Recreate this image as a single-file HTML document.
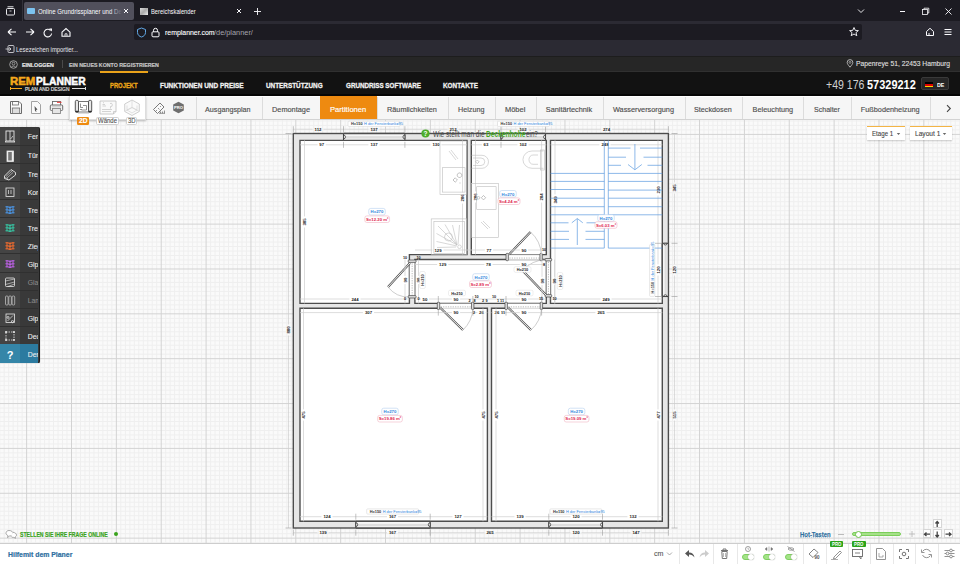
<!DOCTYPE html><html><head><meta charset="utf-8"><style>
*{margin:0;padding:0;box-sizing:border-box}
html,body{width:960px;height:564px;overflow:hidden;background:#fff;font-family:"Liberation Sans",sans-serif;position:relative}
#canvas{position:absolute;left:0;top:119px;width:960px;height:423.5px;background:#fafafa;overflow:hidden}
.grid{position:absolute;left:0;top:0}
.t{position:absolute;white-space:nowrap;line-height:1;transform-origin:0 0}
svg text{font-family:"Liberation Sans",sans-serif}
</style></head><body><div id="canvas"><svg class="grid" width="960" height="423.5" viewBox="0 0 960 423.5"><path d="M-0.28 0V564M4.21 0V564M8.70 0V564M13.18 0V564M17.67 0V564M22.15 0V564M31.13 0V564M35.61 0V564M40.10 0V564M44.58 0V564M49.07 0V564M53.56 0V564M58.04 0V564M62.53 0V564M67.01 0V564M75.99 0V564M80.47 0V564M84.96 0V564M89.44 0V564M93.93 0V564M98.42 0V564M102.90 0V564M107.39 0V564M111.87 0V564M120.85 0V564M125.33 0V564M129.82 0V564M134.30 0V564M138.79 0V564M143.28 0V564M147.76 0V564M152.25 0V564M156.73 0V564M165.71 0V564M170.19 0V564M174.68 0V564M179.16 0V564M183.65 0V564M188.14 0V564M192.62 0V564M197.11 0V564M201.59 0V564M210.57 0V564M215.05 0V564M219.54 0V564M224.02 0V564M228.51 0V564M233.00 0V564M237.48 0V564M241.97 0V564M246.45 0V564M255.43 0V564M259.91 0V564M264.40 0V564M268.88 0V564M273.37 0V564M277.86 0V564M282.34 0V564M286.83 0V564M291.31 0V564M300.29 0V564M304.77 0V564M309.26 0V564M313.74 0V564M318.23 0V564M322.72 0V564M327.20 0V564M331.69 0V564M336.17 0V564M345.15 0V564M349.63 0V564M354.12 0V564M358.60 0V564M363.09 0V564M367.58 0V564M372.06 0V564M376.55 0V564M381.03 0V564M390.01 0V564M394.49 0V564M398.98 0V564M403.46 0V564M407.95 0V564M412.44 0V564M416.92 0V564M421.41 0V564M425.89 0V564M434.87 0V564M439.35 0V564M443.84 0V564M448.32 0V564M452.81 0V564M457.30 0V564M461.78 0V564M466.27 0V564M470.75 0V564M479.73 0V564M484.21 0V564M488.70 0V564M493.18 0V564M497.67 0V564M502.16 0V564M506.64 0V564M511.13 0V564M515.61 0V564M524.59 0V564M529.07 0V564M533.56 0V564M538.04 0V564M542.53 0V564M547.02 0V564M551.50 0V564M555.99 0V564M560.47 0V564M569.45 0V564M573.93 0V564M578.42 0V564M582.90 0V564M587.39 0V564M591.88 0V564M596.36 0V564M600.85 0V564M605.33 0V564M614.31 0V564M618.79 0V564M623.28 0V564M627.76 0V564M632.25 0V564M636.74 0V564M641.22 0V564M645.71 0V564M650.19 0V564M659.17 0V564M663.65 0V564M668.14 0V564M672.62 0V564M677.11 0V564M681.60 0V564M686.08 0V564M690.57 0V564M695.05 0V564M704.03 0V564M708.51 0V564M713.00 0V564M717.48 0V564M721.97 0V564M726.46 0V564M730.94 0V564M735.43 0V564M739.91 0V564M748.89 0V564M753.37 0V564M757.86 0V564M762.34 0V564M766.83 0V564M771.32 0V564M775.80 0V564M780.29 0V564M784.77 0V564M793.75 0V564M798.23 0V564M802.72 0V564M807.20 0V564M811.69 0V564M816.18 0V564M820.66 0V564M825.15 0V564M829.63 0V564M838.61 0V564M843.09 0V564M847.58 0V564M852.06 0V564M856.55 0V564M861.04 0V564M865.52 0V564M870.01 0V564M874.49 0V564M883.47 0V564M887.95 0V564M892.44 0V564M896.92 0V564M901.41 0V564M905.90 0V564M910.38 0V564M914.87 0V564M919.35 0V564M928.33 0V564M932.81 0V564M937.30 0V564M941.78 0V564M946.27 0V564M950.76 0V564M955.24 0V564M959.73 0V564M0 1.94H960M0 6.43H960M0 10.91H960M0 19.89H960M0 24.37H960M0 28.86H960M0 33.34H960M0 37.83H960M0 42.32H960M0 46.80H960M0 51.29H960M0 55.77H960M0 64.75H960M0 69.23H960M0 73.72H960M0 78.20H960M0 82.69H960M0 87.18H960M0 91.66H960M0 96.15H960M0 100.63H960M0 109.61H960M0 114.09H960M0 118.58H960M0 123.06H960M0 127.55H960M0 132.04H960M0 136.52H960M0 141.01H960M0 145.49H960M0 154.47H960M0 158.95H960M0 163.44H960M0 167.92H960M0 172.41H960M0 176.90H960M0 181.38H960M0 185.87H960M0 190.35H960M0 199.33H960M0 203.81H960M0 208.30H960M0 212.78H960M0 217.27H960M0 221.76H960M0 226.24H960M0 230.73H960M0 235.21H960M0 244.19H960M0 248.67H960M0 253.16H960M0 257.64H960M0 262.13H960M0 266.62H960M0 271.10H960M0 275.59H960M0 280.07H960M0 289.05H960M0 293.53H960M0 298.02H960M0 302.50H960M0 306.99H960M0 311.48H960M0 315.96H960M0 320.45H960M0 324.93H960M0 333.91H960M0 338.39H960M0 342.88H960M0 347.36H960M0 351.85H960M0 356.34H960M0 360.82H960M0 365.31H960M0 369.79H960M0 378.77H960M0 383.25H960M0 387.74H960M0 392.22H960M0 396.71H960M0 401.20H960M0 405.68H960M0 410.17H960M0 414.65H960M0 423.63H960" stroke="#efefef" stroke-width="1" fill="none"/><path d="M26.64 0V564M71.50 0V564M116.36 0V564M161.22 0V564M206.08 0V564M250.94 0V564M295.80 0V564M340.66 0V564M385.52 0V564M430.38 0V564M475.24 0V564M520.10 0V564M564.96 0V564M609.82 0V564M654.68 0V564M699.54 0V564M744.40 0V564M789.26 0V564M834.12 0V564M878.98 0V564M923.84 0V564M0 15.40H960M0 60.26H960M0 105.12H960M0 149.98H960M0 194.84H960M0 239.70H960M0 284.56H960M0 329.42H960M0 374.28H960M0 419.14H960" stroke="#d3d3d3" stroke-width="1" fill="none"/></svg></div><svg width="960" height="564" viewBox="0 0 960 564" style="position:absolute;left:0;top:0"><line x1="293.3" y1="129.2" x2="312.45" y2="129.2" stroke="#cfcfcf" stroke-width="0.7"/><line x1="323.55" y1="129.2" x2="368.45" y2="129.2" stroke="#cfcfcf" stroke-width="0.7"/><line x1="379.55" y1="129.2" x2="447.45" y2="129.2" stroke="#cfcfcf" stroke-width="0.7"/><line x1="458.55" y1="129.2" x2="517.45" y2="129.2" stroke="#cfcfcf" stroke-width="0.7"/><line x1="528.55" y1="129.2" x2="600.95" y2="129.2" stroke="#cfcfcf" stroke-width="0.7"/><line x1="612.05" y1="129.2" x2="668.4" y2="129.2" stroke="#cfcfcf" stroke-width="0.7"/><line x1="293.3" y1="126.19999999999999" x2="293.3" y2="132.2" stroke="#9a9a9a" stroke-width="0.6"/><line x1="343.5" y1="126.19999999999999" x2="343.5" y2="132.2" stroke="#9a9a9a" stroke-width="0.6"/><line x1="404.9" y1="126.19999999999999" x2="404.9" y2="132.2" stroke="#9a9a9a" stroke-width="0.6"/><line x1="501" y1="126.19999999999999" x2="501" y2="132.2" stroke="#9a9a9a" stroke-width="0.6"/><line x1="545.5" y1="126.19999999999999" x2="545.5" y2="132.2" stroke="#9a9a9a" stroke-width="0.6"/><line x1="668.4" y1="126.19999999999999" x2="668.4" y2="132.2" stroke="#9a9a9a" stroke-width="0.6"/><text x="318" y="129.2" font-size="4.3" fill="#1a1a1a" text-anchor="middle" dominant-baseline="central" font-weight="bold">112</text><text x="374" y="129.2" font-size="4.3" fill="#1a1a1a" text-anchor="middle" dominant-baseline="central" font-weight="bold">137</text><text x="453" y="129.2" font-size="4.3" fill="#1a1a1a" text-anchor="middle" dominant-baseline="central" font-weight="bold">212</text><text x="523" y="129.2" font-size="4.3" fill="#1a1a1a" text-anchor="middle" dominant-baseline="central" font-weight="bold">102</text><text x="606.5" y="129.2" font-size="4.3" fill="#1a1a1a" text-anchor="middle" dominant-baseline="central" font-weight="bold">274</text><line x1="293.3" y1="532.7" x2="317.45" y2="532.7" stroke="#cfcfcf" stroke-width="0.7"/><line x1="328.55" y1="532.7" x2="386.95" y2="532.7" stroke="#cfcfcf" stroke-width="0.7"/><line x1="398.05" y1="532.7" x2="484.45" y2="532.7" stroke="#cfcfcf" stroke-width="0.7"/><line x1="495.55" y1="532.7" x2="570.45" y2="532.7" stroke="#cfcfcf" stroke-width="0.7"/><line x1="581.55" y1="532.7" x2="630.45" y2="532.7" stroke="#cfcfcf" stroke-width="0.7"/><line x1="641.55" y1="532.7" x2="668.4" y2="532.7" stroke="#cfcfcf" stroke-width="0.7"/><line x1="293.3" y1="529.7" x2="293.3" y2="535.7" stroke="#9a9a9a" stroke-width="0.6"/><line x1="355.8" y1="529.7" x2="355.8" y2="535.7" stroke="#9a9a9a" stroke-width="0.6"/><line x1="430.2" y1="529.7" x2="430.2" y2="535.7" stroke="#9a9a9a" stroke-width="0.6"/><line x1="548.8" y1="529.7" x2="548.8" y2="535.7" stroke="#9a9a9a" stroke-width="0.6"/><line x1="602.5" y1="529.7" x2="602.5" y2="535.7" stroke="#9a9a9a" stroke-width="0.6"/><line x1="668.4" y1="529.7" x2="668.4" y2="535.7" stroke="#9a9a9a" stroke-width="0.6"/><text x="323" y="532.7" font-size="4.3" fill="#1a1a1a" text-anchor="middle" dominant-baseline="central" font-weight="bold">139</text><text x="392.5" y="532.7" font-size="4.3" fill="#1a1a1a" text-anchor="middle" dominant-baseline="central" font-weight="bold">167</text><text x="490" y="532.7" font-size="4.3" fill="#1a1a1a" text-anchor="middle" dominant-baseline="central" font-weight="bold">265</text><text x="576" y="532.7" font-size="4.3" fill="#1a1a1a" text-anchor="middle" dominant-baseline="central" font-weight="bold">120</text><text x="636" y="532.7" font-size="4.3" fill="#1a1a1a" text-anchor="middle" dominant-baseline="central" font-weight="bold">147</text><line x1="288.5" y1="133.5" x2="288.5" y2="324.45" stroke="#cfcfcf" stroke-width="0.7"/><line x1="288.5" y1="335.55" x2="288.5" y2="528" stroke="#cfcfcf" stroke-width="0.7"/><line x1="285.5" y1="133.5" x2="291.5" y2="133.5" stroke="#9a9a9a" stroke-width="0.6"/><line x1="285.5" y1="528" x2="291.5" y2="528" stroke="#9a9a9a" stroke-width="0.6"/><text x="288.5" y="330" font-size="4.3" fill="#1a1a1a" text-anchor="middle" dominant-baseline="central" font-weight="bold" transform="rotate(-90 288.5 330)">880</text><line x1="674.5" y1="133.5" x2="674.5" y2="182.45" stroke="#cfcfcf" stroke-width="0.7"/><line x1="674.5" y1="193.55" x2="674.5" y2="264.45" stroke="#cfcfcf" stroke-width="0.7"/><line x1="674.5" y1="275.55" x2="674.5" y2="409.45" stroke="#cfcfcf" stroke-width="0.7"/><line x1="674.5" y1="420.55" x2="674.5" y2="528" stroke="#cfcfcf" stroke-width="0.7"/><line x1="671.5" y1="133.5" x2="677.5" y2="133.5" stroke="#9a9a9a" stroke-width="0.6"/><line x1="671.5" y1="243.3" x2="677.5" y2="243.3" stroke="#9a9a9a" stroke-width="0.6"/><line x1="671.5" y1="296.5" x2="677.5" y2="296.5" stroke="#9a9a9a" stroke-width="0.6"/><line x1="671.5" y1="528" x2="677.5" y2="528" stroke="#9a9a9a" stroke-width="0.6"/><text x="674.5" y="188" font-size="4.3" fill="#1a1a1a" text-anchor="middle" dominant-baseline="central" font-weight="bold" transform="rotate(-90 674.5 188)">345</text><text x="674.5" y="270" font-size="4.3" fill="#1a1a1a" text-anchor="middle" dominant-baseline="central" font-weight="bold" transform="rotate(-90 674.5 270)">120</text><text x="674.5" y="415" font-size="4.3" fill="#1a1a1a" text-anchor="middle" dominant-baseline="central" font-weight="bold" transform="rotate(-90 674.5 415)">515</text><rect x="293.3" y="133.5" width="375.1" height="394.5" fill="#e6e6e6" stroke="#4d4d4d" stroke-width="1.4"/><path d="M300 140.4L467 140.4L467 254.6L409.4 254.6L409.4 303.4L300 303.4ZM471.3 140.4L546.3 140.4L546.3 254.6L471.3 254.6ZM550.5 140.4L662.3 140.4L662.3 303.4L550.5 303.4ZM414.9 259.5L546.3 259.5L546.3 303.4L414.9 303.4ZM300 308.3L487.4 308.3L487.4 521.3L300 521.3ZM491.5 308.3L662.3 308.3L662.3 521.3L491.5 521.3Z" fill="#fff" stroke="#4d4d4d" stroke-width="1.4"/><rect x="343.5" y="133.5" width="61.39999999999998" height="6.900000000000006" fill="#f6f6f6"/><rect x="343.5" y="136.122" width="61.39999999999998" height="2.4840000000000018" fill="#dedede"/><line x1="343.5" y1="133.5" x2="404.9" y2="133.5" stroke="#4d4d4d" stroke-width="1.3"/><line x1="343.5" y1="140.4" x2="404.9" y2="140.4" stroke="#4d4d4d" stroke-width="1.3"/><line x1="343.5" y1="133.5" x2="343.5" y2="140.4" stroke="#444" stroke-width="1.1"/><line x1="404.9" y1="133.5" x2="404.9" y2="140.4" stroke="#444" stroke-width="1.1"/><path d="M343.5 135.018A1.9320000000000017 1.9320000000000017 0 0 1 343.5 138.882Z M404.9 135.018A1.9320000000000017 1.9320000000000017 0 0 0 404.9 138.882Z" fill="#fff" stroke="#333" stroke-width="0.8"/><rect x="501" y="133.5" width="44.5" height="6.900000000000006" fill="#f6f6f6"/><rect x="501" y="136.122" width="44.5" height="2.4840000000000018" fill="#dedede"/><line x1="501" y1="133.5" x2="545.5" y2="133.5" stroke="#4d4d4d" stroke-width="1.3"/><line x1="501" y1="140.4" x2="545.5" y2="140.4" stroke="#4d4d4d" stroke-width="1.3"/><line x1="501" y1="133.5" x2="501" y2="140.4" stroke="#444" stroke-width="1.1"/><line x1="545.5" y1="133.5" x2="545.5" y2="140.4" stroke="#444" stroke-width="1.1"/><path d="M501 135.018A1.9320000000000017 1.9320000000000017 0 0 1 501 138.882Z M545.5 135.018A1.9320000000000017 1.9320000000000017 0 0 0 545.5 138.882Z" fill="#fff" stroke="#333" stroke-width="0.8"/><rect x="355.8" y="521.3" width="74.39999999999998" height="6.7000000000000455" fill="#f6f6f6"/><rect x="355.8" y="523.846" width="74.39999999999998" height="2.4120000000000164" fill="#dedede"/><line x1="355.8" y1="521.3" x2="430.2" y2="521.3" stroke="#4d4d4d" stroke-width="1.3"/><line x1="355.8" y1="528" x2="430.2" y2="528" stroke="#4d4d4d" stroke-width="1.3"/><line x1="355.8" y1="521.3" x2="355.8" y2="528" stroke="#444" stroke-width="1.1"/><line x1="430.2" y1="521.3" x2="430.2" y2="528" stroke="#444" stroke-width="1.1"/><path d="M355.8 522.774A1.876000000000013 1.876000000000013 0 0 1 355.8 526.526Z M430.2 522.774A1.876000000000013 1.876000000000013 0 0 0 430.2 526.526Z" fill="#fff" stroke="#333" stroke-width="0.8"/><rect x="548.8" y="521.3" width="53.700000000000045" height="6.7000000000000455" fill="#f6f6f6"/><rect x="548.8" y="523.846" width="53.700000000000045" height="2.4120000000000164" fill="#dedede"/><line x1="548.8" y1="521.3" x2="602.5" y2="521.3" stroke="#4d4d4d" stroke-width="1.3"/><line x1="548.8" y1="528" x2="602.5" y2="528" stroke="#4d4d4d" stroke-width="1.3"/><line x1="548.8" y1="521.3" x2="548.8" y2="528" stroke="#444" stroke-width="1.1"/><line x1="602.5" y1="521.3" x2="602.5" y2="528" stroke="#444" stroke-width="1.1"/><path d="M548.8 522.774A1.876000000000013 1.876000000000013 0 0 1 548.8 526.526Z M602.5 522.774A1.876000000000013 1.876000000000013 0 0 0 602.5 526.526Z" fill="#fff" stroke="#333" stroke-width="0.8"/><rect x="662.3" y="243.3" width="6.100000000000023" height="53.19999999999999" fill="#f6f6f6"/><rect x="664.6179999999999" y="243.3" width="2.196000000000008" height="53.19999999999999" fill="#dedede"/><line x1="662.3" y1="243.3" x2="662.3" y2="296.5" stroke="#4d4d4d" stroke-width="1.3"/><line x1="668.4" y1="243.3" x2="668.4" y2="296.5" stroke="#4d4d4d" stroke-width="1.3"/><line x1="662.3" y1="243.3" x2="668.4" y2="243.3" stroke="#444" stroke-width="1.1"/><line x1="662.3" y1="296.5" x2="668.4" y2="296.5" stroke="#444" stroke-width="1.1"/><path d="M663.6419999999999 243.3A1.7080000000000066 1.7080000000000066 0 0 0 667.058 243.3Z M663.6419999999999 296.5A1.7080000000000066 1.7080000000000066 0 0 1 667.058 296.5Z" fill="#fff" stroke="#333" stroke-width="0.8"/><rect x="408.7" y="261" width="6.9" height="36" fill="#fff"/><line x1="409.4" y1="261" x2="409.4" y2="297" stroke="#666" stroke-width="0.8"/><line x1="414.9" y1="261" x2="414.9" y2="297" stroke="#666" stroke-width="0.8"/><line x1="412.15" y1="261" x2="412.15" y2="297" stroke="#888" stroke-width="0.6" stroke-dasharray="1.2 1.2"/><rect x="408.2" y="260" width="7.9" height="2.4" rx="0.8" fill="#e0e0e0" stroke="#444" stroke-width="0.7"/><rect x="408.2" y="295.6" width="7.9" height="2.4" rx="0.8" fill="#e0e0e0" stroke="#444" stroke-width="0.7"/><line x1="410" y1="263" x2="388" y2="287" stroke="#555" stroke-width="2.2" stroke-linecap="butt"/><line x1="410" y1="263" x2="388" y2="287" stroke="#fff" stroke-width="0.9"/><path d="M388 287A26 26 0 0 0 409.4 297" fill="none" stroke="#9c9c9c" stroke-width="0.5"/><rect x="507" y="253.9" width="34.299999999999955" height="6.300000000000006" fill="#fff"/><line x1="507" y1="254.6" x2="541.3" y2="254.6" stroke="#666" stroke-width="0.8"/><line x1="507" y1="258.05" x2="541.3" y2="258.05" stroke="#888" stroke-width="0.6" stroke-dasharray="1.2 1.2"/><line x1="507" y1="259.5" x2="541.3" y2="259.5" stroke="#aaa" stroke-width="0.5"/><rect x="506" y="253.4" width="2.4" height="7.300000000000006" rx="0.8" fill="#e0e0e0" stroke="#444" stroke-width="0.7"/><rect x="539.9" y="253.4" width="2.4" height="7.300000000000006" rx="0.8" fill="#e0e0e0" stroke="#444" stroke-width="0.7"/><line x1="509" y1="254.6" x2="530.5" y2="232" stroke="#555" stroke-width="2.2" stroke-linecap="butt"/><line x1="509" y1="254.6" x2="530.5" y2="232" stroke="#fff" stroke-width="0.9"/><path d="M530.5 232A32 32 0 0 1 541.3 254.6" fill="none" stroke="#9c9c9c" stroke-width="0.5"/><rect x="545.5999999999999" y="259.5" width="5.600000000000046" height="36.5" fill="#fff"/><line x1="546.3" y1="259.5" x2="546.3" y2="296" stroke="#666" stroke-width="0.8"/><line x1="550.5" y1="259.5" x2="550.5" y2="296" stroke="#666" stroke-width="0.8"/><line x1="548.4" y1="259.5" x2="548.4" y2="296" stroke="#888" stroke-width="0.6" stroke-dasharray="1.2 1.2"/><rect x="545.0999999999999" y="258.5" width="6.600000000000046" height="2.4" rx="0.8" fill="#e0e0e0" stroke="#444" stroke-width="0.7"/><rect x="545.0999999999999" y="294.6" width="6.600000000000046" height="2.4" rx="0.8" fill="#e0e0e0" stroke="#444" stroke-width="0.7"/><line x1="546" y1="295" x2="522.5" y2="270.5" stroke="#555" stroke-width="2.2" stroke-linecap="butt"/><line x1="546" y1="295" x2="522.5" y2="270.5" stroke="#fff" stroke-width="0.9"/><path d="M522.5 270.5A34 34 0 0 1 546 259.5" fill="none" stroke="#9c9c9c" stroke-width="0.5"/><rect x="438.3" y="302.7" width="34.599999999999966" height="6.3000000000000345" fill="#fff"/><line x1="438.3" y1="303.4" x2="472.9" y2="303.4" stroke="#666" stroke-width="0.8"/><line x1="438.3" y1="306.85" x2="472.9" y2="306.85" stroke="#888" stroke-width="0.6" stroke-dasharray="1.2 1.2"/><line x1="438.3" y1="308.3" x2="472.9" y2="308.3" stroke="#aaa" stroke-width="0.5"/><rect x="437.3" y="302.2" width="2.4" height="7.3000000000000345" rx="0.8" fill="#e0e0e0" stroke="#444" stroke-width="0.7"/><rect x="471.5" y="302.2" width="2.4" height="7.3000000000000345" rx="0.8" fill="#e0e0e0" stroke="#444" stroke-width="0.7"/><line x1="440" y1="307.5" x2="463" y2="330" stroke="#555" stroke-width="2.2" stroke-linecap="butt"/><line x1="440" y1="307.5" x2="463" y2="330" stroke="#fff" stroke-width="0.9"/><path d="M463 330A32 32 0 0 0 472.9 308.3" fill="none" stroke="#9c9c9c" stroke-width="0.5"/><rect x="506" y="302.7" width="35.60000000000002" height="6.3000000000000345" fill="#fff"/><line x1="506" y1="303.4" x2="541.6" y2="303.4" stroke="#666" stroke-width="0.8"/><line x1="506" y1="306.85" x2="541.6" y2="306.85" stroke="#888" stroke-width="0.6" stroke-dasharray="1.2 1.2"/><line x1="506" y1="308.3" x2="541.6" y2="308.3" stroke="#aaa" stroke-width="0.5"/><rect x="505" y="302.2" width="2.4" height="7.3000000000000345" rx="0.8" fill="#e0e0e0" stroke="#444" stroke-width="0.7"/><rect x="540.2" y="302.2" width="2.4" height="7.3000000000000345" rx="0.8" fill="#e0e0e0" stroke="#444" stroke-width="0.7"/><line x1="508" y1="307.5" x2="531" y2="330" stroke="#555" stroke-width="2.2" stroke-linecap="butt"/><line x1="508" y1="307.5" x2="531" y2="330" stroke="#fff" stroke-width="0.9"/><path d="M531 330A32 32 0 0 0 541.6 308.3" fill="none" stroke="#9c9c9c" stroke-width="0.5"/><line x1="300" y1="144.8" x2="317.59999999999997" y2="144.8" stroke="#cfcfcf" stroke-width="0.7"/><line x1="325.8" y1="144.8" x2="368.45" y2="144.8" stroke="#cfcfcf" stroke-width="0.7"/><line x1="379.55" y1="144.8" x2="430.45" y2="144.8" stroke="#cfcfcf" stroke-width="0.7"/><line x1="441.55" y1="144.8" x2="467" y2="144.8" stroke="#cfcfcf" stroke-width="0.7"/><line x1="343.5" y1="141.8" x2="343.5" y2="147.8" stroke="#9a9a9a" stroke-width="0.6"/><line x1="404.9" y1="141.8" x2="404.9" y2="147.8" stroke="#9a9a9a" stroke-width="0.6"/><text x="321.7" y="144.8" font-size="4.3" fill="#1a1a1a" text-anchor="middle" dominant-baseline="central" font-weight="bold">97</text><text x="374" y="144.8" font-size="4.3" fill="#1a1a1a" text-anchor="middle" dominant-baseline="central" font-weight="bold">137</text><text x="436" y="144.8" font-size="4.3" fill="#1a1a1a" text-anchor="middle" dominant-baseline="central" font-weight="bold">130</text><line x1="471.3" y1="144.8" x2="481.9" y2="144.8" stroke="#cfcfcf" stroke-width="0.7"/><line x1="490.1" y1="144.8" x2="517.45" y2="144.8" stroke="#cfcfcf" stroke-width="0.7"/><line x1="528.55" y1="144.8" x2="546.3" y2="144.8" stroke="#cfcfcf" stroke-width="0.7"/><line x1="501" y1="141.8" x2="501" y2="147.8" stroke="#9a9a9a" stroke-width="0.6"/><text x="486" y="144.8" font-size="4.3" fill="#1a1a1a" text-anchor="middle" dominant-baseline="central" font-weight="bold">63</text><text x="523" y="144.8" font-size="4.3" fill="#1a1a1a" text-anchor="middle" dominant-baseline="central" font-weight="bold">102</text><line x1="550.5" y1="144.8" x2="599.45" y2="144.8" stroke="#cfcfcf" stroke-width="0.7"/><line x1="610.55" y1="144.8" x2="662.3" y2="144.8" stroke="#cfcfcf" stroke-width="0.7"/><text x="605" y="144.8" font-size="4.3" fill="#1a1a1a" text-anchor="middle" dominant-baseline="central" font-weight="bold">248</text><line x1="304.5" y1="140.4" x2="304.5" y2="216.45" stroke="#cfcfcf" stroke-width="0.7"/><line x1="304.5" y1="227.55" x2="304.5" y2="303.4" stroke="#cfcfcf" stroke-width="0.7"/><text x="304.5" y="222" font-size="4.3" fill="#1a1a1a" text-anchor="middle" dominant-baseline="central" font-weight="bold" transform="rotate(-90 304.5 222)">385</text><line x1="462.5" y1="140.4" x2="462.5" y2="192.45" stroke="#cfcfcf" stroke-width="0.7"/><line x1="462.5" y1="203.55" x2="462.5" y2="254.6" stroke="#cfcfcf" stroke-width="0.7"/><text x="462.5" y="198" font-size="4.3" fill="#1a1a1a" text-anchor="middle" dominant-baseline="central" font-weight="bold" transform="rotate(-90 462.5 198)">286</text><line x1="475.5" y1="140.4" x2="475.5" y2="191.45" stroke="#cfcfcf" stroke-width="0.7"/><line x1="475.5" y1="202.55" x2="475.5" y2="254.6" stroke="#cfcfcf" stroke-width="0.7"/><text x="475.5" y="197" font-size="4.3" fill="#1a1a1a" text-anchor="middle" dominant-baseline="central" font-weight="bold" transform="rotate(-90 475.5 197)">286</text><line x1="541.6" y1="140.4" x2="541.6" y2="191.45" stroke="#cfcfcf" stroke-width="0.7"/><line x1="541.6" y1="202.55" x2="541.6" y2="254.6" stroke="#cfcfcf" stroke-width="0.7"/><text x="541.6" y="197" font-size="4.3" fill="#1a1a1a" text-anchor="middle" dominant-baseline="central" font-weight="bold" transform="rotate(-90 541.6 197)">284</text><line x1="555" y1="140.4" x2="555" y2="194.45" stroke="#cfcfcf" stroke-width="0.7"/><line x1="555" y1="205.55" x2="555" y2="303.4" stroke="#cfcfcf" stroke-width="0.7"/><text x="555" y="200" font-size="4.3" fill="#1a1a1a" text-anchor="middle" dominant-baseline="central" font-weight="bold" transform="rotate(-90 555 200)">349</text><line x1="658" y1="140.4" x2="658" y2="184.45" stroke="#cfcfcf" stroke-width="0.7"/><line x1="658" y1="195.55" x2="658" y2="264.45" stroke="#cfcfcf" stroke-width="0.7"/><line x1="658" y1="275.55" x2="658" y2="303.4" stroke="#cfcfcf" stroke-width="0.7"/><line x1="655" y1="243.3" x2="661" y2="243.3" stroke="#9a9a9a" stroke-width="0.6"/><line x1="655" y1="296.5" x2="661" y2="296.5" stroke="#9a9a9a" stroke-width="0.6"/><text x="658" y="190" font-size="4.3" fill="#1a1a1a" text-anchor="middle" dominant-baseline="central" font-weight="bold" transform="rotate(-90 658 190)">230</text><text x="658" y="270" font-size="4.3" fill="#1a1a1a" text-anchor="middle" dominant-baseline="central" font-weight="bold" transform="rotate(-90 658 270)">120</text><line x1="415" y1="250" x2="432.45" y2="250" stroke="#cfcfcf" stroke-width="0.7"/><line x1="443.55" y1="250" x2="484.9" y2="250" stroke="#cfcfcf" stroke-width="0.7"/><line x1="493.1" y1="250" x2="519.9" y2="250" stroke="#cfcfcf" stroke-width="0.7"/><line x1="528.1" y1="250" x2="546.3" y2="250" stroke="#cfcfcf" stroke-width="0.7"/><text x="438" y="250" font-size="4.3" fill="#1a1a1a" text-anchor="middle" dominant-baseline="central" font-weight="bold">129</text><text x="489" y="250" font-size="4.3" fill="#1a1a1a" text-anchor="middle" dominant-baseline="central" font-weight="bold">77</text><text x="524" y="250" font-size="4.3" fill="#1a1a1a" text-anchor="middle" dominant-baseline="central" font-weight="bold">90</text><line x1="414.9" y1="264.5" x2="437.15" y2="264.5" stroke="#cfcfcf" stroke-width="0.7"/><line x1="448.25" y1="264.5" x2="484.4" y2="264.5" stroke="#cfcfcf" stroke-width="0.7"/><line x1="492.6" y1="264.5" x2="519.9" y2="264.5" stroke="#cfcfcf" stroke-width="0.7"/><line x1="528.1" y1="264.5" x2="546.3" y2="264.5" stroke="#cfcfcf" stroke-width="0.7"/><text x="442.7" y="264.5" font-size="4.3" fill="#1a1a1a" text-anchor="middle" dominant-baseline="central" font-weight="bold">129</text><text x="488.5" y="264.5" font-size="4.3" fill="#1a1a1a" text-anchor="middle" dominant-baseline="central" font-weight="bold">78</text><text x="524" y="264.5" font-size="4.3" fill="#1a1a1a" text-anchor="middle" dominant-baseline="central" font-weight="bold">90</text><line x1="300" y1="299" x2="349.45" y2="299" stroke="#cfcfcf" stroke-width="0.7"/><line x1="360.55" y1="299" x2="409.4" y2="299" stroke="#cfcfcf" stroke-width="0.7"/><text x="355" y="299" font-size="4.3" fill="#1a1a1a" text-anchor="middle" dominant-baseline="central" font-weight="bold">244</text><line x1="414.9" y1="299" x2="420.9" y2="299" stroke="#cfcfcf" stroke-width="0.7"/><line x1="429.1" y1="299" x2="451.9" y2="299" stroke="#cfcfcf" stroke-width="0.7"/><line x1="460.1" y1="299" x2="519.9" y2="299" stroke="#cfcfcf" stroke-width="0.7"/><line x1="528.1" y1="299" x2="546.3" y2="299" stroke="#cfcfcf" stroke-width="0.7"/><line x1="438.3" y1="296" x2="438.3" y2="302" stroke="#9a9a9a" stroke-width="0.6"/><line x1="472.9" y1="296" x2="472.9" y2="302" stroke="#9a9a9a" stroke-width="0.6"/><line x1="506" y1="296" x2="506" y2="302" stroke="#9a9a9a" stroke-width="0.6"/><line x1="541.6" y1="296" x2="541.6" y2="302" stroke="#9a9a9a" stroke-width="0.6"/><text x="425" y="299" font-size="4.3" fill="#1a1a1a" text-anchor="middle" dominant-baseline="central" font-weight="bold">50</text><text x="456" y="299" font-size="4.3" fill="#1a1a1a" text-anchor="middle" dominant-baseline="central" font-weight="bold">90</text><text x="524" y="299" font-size="4.3" fill="#1a1a1a" text-anchor="middle" dominant-baseline="central" font-weight="bold">90</text><line x1="550.5" y1="299" x2="600.45" y2="299" stroke="#cfcfcf" stroke-width="0.7"/><line x1="611.55" y1="299" x2="662.3" y2="299" stroke="#cfcfcf" stroke-width="0.7"/><text x="606" y="299" font-size="4.3" fill="#1a1a1a" text-anchor="middle" dominant-baseline="central" font-weight="bold">249</text><line x1="405" y1="259.5" x2="405" y2="275.9" stroke="#cfcfcf" stroke-width="0.7"/><line x1="405" y1="284.1" x2="405" y2="303.4" stroke="#cfcfcf" stroke-width="0.7"/><text x="405" y="280" font-size="4.3" fill="#1a1a1a" text-anchor="middle" dominant-baseline="central" font-weight="bold" transform="rotate(-90 405 280)">90</text><line x1="418.5" y1="259.5" x2="418.5" y2="275.9" stroke="#cfcfcf" stroke-width="0.7"/><line x1="418.5" y1="284.1" x2="418.5" y2="303.4" stroke="#cfcfcf" stroke-width="0.7"/><text x="418.5" y="280" font-size="4.3" fill="#1a1a1a" text-anchor="middle" dominant-baseline="central" font-weight="bold" transform="rotate(-90 418.5 280)">90</text><line x1="542" y1="259.5" x2="542" y2="276.9" stroke="#cfcfcf" stroke-width="0.7"/><line x1="542" y1="285.1" x2="542" y2="303.4" stroke="#cfcfcf" stroke-width="0.7"/><text x="542" y="281" font-size="4.3" fill="#1a1a1a" text-anchor="middle" dominant-baseline="central" font-weight="bold" transform="rotate(-90 542 281)">90</text><line x1="554.5" y1="259.5" x2="554.5" y2="276.9" stroke="#cfcfcf" stroke-width="0.7"/><line x1="554.5" y1="285.1" x2="554.5" y2="303.4" stroke="#cfcfcf" stroke-width="0.7"/><text x="554.5" y="281" font-size="4.3" fill="#1a1a1a" text-anchor="middle" dominant-baseline="central" font-weight="bold" transform="rotate(-90 554.5 281)">90</text><line x1="300" y1="312.6" x2="362.95" y2="312.6" stroke="#cfcfcf" stroke-width="0.7"/><line x1="374.05" y1="312.6" x2="451.9" y2="312.6" stroke="#cfcfcf" stroke-width="0.7"/><line x1="460.1" y1="312.6" x2="477.4" y2="312.6" stroke="#cfcfcf" stroke-width="0.7"/><line x1="485.6" y1="312.6" x2="487.4" y2="312.6" stroke="#cfcfcf" stroke-width="0.7"/><line x1="438.3" y1="309.6" x2="438.3" y2="315.6" stroke="#9a9a9a" stroke-width="0.6"/><line x1="472.9" y1="309.6" x2="472.9" y2="315.6" stroke="#9a9a9a" stroke-width="0.6"/><text x="368.5" y="312.6" font-size="4.3" fill="#1a1a1a" text-anchor="middle" dominant-baseline="central" font-weight="bold">307</text><text x="456" y="312.6" font-size="4.3" fill="#1a1a1a" text-anchor="middle" dominant-baseline="central" font-weight="bold">90</text><text x="481.5" y="312.6" font-size="4.3" fill="#1a1a1a" text-anchor="middle" dominant-baseline="central" font-weight="bold">26</text><line x1="491.5" y1="312.6" x2="492.9" y2="312.6" stroke="#cfcfcf" stroke-width="0.7"/><line x1="501.1" y1="312.6" x2="519.9" y2="312.6" stroke="#cfcfcf" stroke-width="0.7"/><line x1="528.1" y1="312.6" x2="595.45" y2="312.6" stroke="#cfcfcf" stroke-width="0.7"/><line x1="606.55" y1="312.6" x2="662.3" y2="312.6" stroke="#cfcfcf" stroke-width="0.7"/><line x1="506" y1="309.6" x2="506" y2="315.6" stroke="#9a9a9a" stroke-width="0.6"/><line x1="541.6" y1="309.6" x2="541.6" y2="315.6" stroke="#9a9a9a" stroke-width="0.6"/><text x="497" y="312.6" font-size="4.3" fill="#1a1a1a" text-anchor="middle" dominant-baseline="central" font-weight="bold">26</text><text x="524" y="312.6" font-size="4.3" fill="#1a1a1a" text-anchor="middle" dominant-baseline="central" font-weight="bold">90</text><text x="601" y="312.6" font-size="4.3" fill="#1a1a1a" text-anchor="middle" dominant-baseline="central" font-weight="bold">265</text><line x1="300" y1="516.7" x2="321.45" y2="516.7" stroke="#cfcfcf" stroke-width="0.7"/><line x1="332.55" y1="516.7" x2="386.95" y2="516.7" stroke="#cfcfcf" stroke-width="0.7"/><line x1="398.05" y1="516.7" x2="452.45" y2="516.7" stroke="#cfcfcf" stroke-width="0.7"/><line x1="463.55" y1="516.7" x2="487.4" y2="516.7" stroke="#cfcfcf" stroke-width="0.7"/><line x1="355.8" y1="513.7" x2="355.8" y2="519.7" stroke="#9a9a9a" stroke-width="0.6"/><line x1="430.2" y1="513.7" x2="430.2" y2="519.7" stroke="#9a9a9a" stroke-width="0.6"/><text x="327" y="516.7" font-size="4.3" fill="#1a1a1a" text-anchor="middle" dominant-baseline="central" font-weight="bold">124</text><text x="392.5" y="516.7" font-size="4.3" fill="#1a1a1a" text-anchor="middle" dominant-baseline="central" font-weight="bold">167</text><text x="458" y="516.7" font-size="4.3" fill="#1a1a1a" text-anchor="middle" dominant-baseline="central" font-weight="bold">127</text><line x1="491.5" y1="516.7" x2="514.45" y2="516.7" stroke="#cfcfcf" stroke-width="0.7"/><line x1="525.55" y1="516.7" x2="570.45" y2="516.7" stroke="#cfcfcf" stroke-width="0.7"/><line x1="581.55" y1="516.7" x2="627.45" y2="516.7" stroke="#cfcfcf" stroke-width="0.7"/><line x1="638.55" y1="516.7" x2="662.3" y2="516.7" stroke="#cfcfcf" stroke-width="0.7"/><line x1="548.8" y1="513.7" x2="548.8" y2="519.7" stroke="#9a9a9a" stroke-width="0.6"/><line x1="602.5" y1="513.7" x2="602.5" y2="519.7" stroke="#9a9a9a" stroke-width="0.6"/><text x="520" y="516.7" font-size="4.3" fill="#1a1a1a" text-anchor="middle" dominant-baseline="central" font-weight="bold">139</text><text x="576" y="516.7" font-size="4.3" fill="#1a1a1a" text-anchor="middle" dominant-baseline="central" font-weight="bold">120</text><text x="633" y="516.7" font-size="4.3" fill="#1a1a1a" text-anchor="middle" dominant-baseline="central" font-weight="bold">132</text><line x1="303.5" y1="308.3" x2="303.5" y2="409.45" stroke="#cfcfcf" stroke-width="0.7"/><line x1="303.5" y1="420.55" x2="303.5" y2="521.3" stroke="#cfcfcf" stroke-width="0.7"/><text x="303.5" y="415" font-size="4.3" fill="#1a1a1a" text-anchor="middle" dominant-baseline="central" font-weight="bold" transform="rotate(-90 303.5 415)">475</text><line x1="483" y1="308.3" x2="483" y2="409.45" stroke="#cfcfcf" stroke-width="0.7"/><line x1="483" y1="420.55" x2="483" y2="521.3" stroke="#cfcfcf" stroke-width="0.7"/><text x="483" y="415" font-size="4.3" fill="#1a1a1a" text-anchor="middle" dominant-baseline="central" font-weight="bold" transform="rotate(-90 483 415)">475</text><line x1="496" y1="308.3" x2="496" y2="409.45" stroke="#cfcfcf" stroke-width="0.7"/><line x1="496" y1="420.55" x2="496" y2="521.3" stroke="#cfcfcf" stroke-width="0.7"/><text x="496" y="415" font-size="4.3" fill="#1a1a1a" text-anchor="middle" dominant-baseline="central" font-weight="bold" transform="rotate(-90 496 415)">475</text><line x1="658" y1="308.3" x2="658" y2="409.45" stroke="#cfcfcf" stroke-width="0.7"/><line x1="658" y1="420.55" x2="658" y2="521.3" stroke="#cfcfcf" stroke-width="0.7"/><text x="658" y="415" font-size="4.3" fill="#1a1a1a" text-anchor="middle" dominant-baseline="central" font-weight="bold" transform="rotate(-90 658 415)">477</text><text x="476.5" y="297" font-size="3.8" fill="#1a1a1a" text-anchor="middle" dominant-baseline="central" font-weight="bold">10</text><text x="494" y="297" font-size="3.8" fill="#1a1a1a" text-anchor="middle" dominant-baseline="central" font-weight="bold">10</text><text x="469.5" y="301" font-size="3.8" fill="#1a1a1a" text-anchor="middle" dominant-baseline="central" font-weight="bold">2</text><text x="474.5" y="301" font-size="3.8" fill="#1a1a1a" text-anchor="middle" dominant-baseline="central" font-weight="bold">8</text><text x="483" y="301" font-size="3.8" fill="#1a1a1a" text-anchor="middle" dominant-baseline="central" font-weight="bold">2</text><text x="486.5" y="301" font-size="3.8" fill="#1a1a1a" text-anchor="middle" dominant-baseline="central" font-weight="bold">9</text><text x="498" y="301" font-size="3.8" fill="#1a1a1a" text-anchor="middle" dominant-baseline="central" font-weight="bold">1</text><text x="502" y="301" font-size="3.8" fill="#1a1a1a" text-anchor="middle" dominant-baseline="central" font-weight="bold">11</text><text x="474" y="312.6" font-size="3.8" fill="#1a1a1a" text-anchor="middle" dominant-baseline="central" font-weight="bold">2</text><text x="503" y="312.6" font-size="3.8" fill="#1a1a1a" text-anchor="middle" dominant-baseline="central" font-weight="bold">11</text><text x="405" y="258" font-size="3.8" fill="#1a1a1a" text-anchor="middle" dominant-baseline="central" font-weight="bold">10</text><text x="418.5" y="258" font-size="3.8" fill="#1a1a1a" text-anchor="middle" dominant-baseline="central" font-weight="bold">10</text><text x="405" y="299" font-size="3.8" fill="#1a1a1a" text-anchor="middle" dominant-baseline="central" font-weight="bold">0</text><text x="418.5" y="299" font-size="3.8" fill="#1a1a1a" text-anchor="middle" dominant-baseline="central" font-weight="bold">0</text><text x="544" y="250" font-size="3.8" fill="#1a1a1a" text-anchor="middle" dominant-baseline="central" font-weight="bold">10</text><text x="544" y="264.5" font-size="3.8" fill="#1a1a1a" text-anchor="middle" dominant-baseline="central" font-weight="bold">8</text><text x="554.5" y="299" font-size="3.8" fill="#1a1a1a" text-anchor="middle" dominant-baseline="central" font-weight="bold">10</text><text x="541" y="299" font-size="3.8" fill="#1a1a1a" text-anchor="middle" dominant-baseline="central" font-weight="bold">15</text><g transform="rotate(-90 422.5 280)"><rect x="414.0" y="277.2" width="17" height="5.6" rx="1.5" fill="#fff" stroke="#ddd" stroke-width="0.5"/><text x="422.5" y="280" font-size="3.9" fill="#1a1a1a" text-anchor="middle" dominant-baseline="central" font-weight="bold">H=210</text></g><rect x="448.5" y="290.2" width="17" height="5.6" rx="1.5" fill="#fff" stroke="#ddd" stroke-width="0.5"/><text x="457" y="293" font-size="3.9" fill="#1a1a1a" text-anchor="middle" dominant-baseline="central" font-weight="bold">H=210</text><rect x="516.0" y="290.2" width="17" height="5.6" rx="1.5" fill="#fff" stroke="#ddd" stroke-width="0.5"/><text x="524.5" y="293" font-size="3.9" fill="#1a1a1a" text-anchor="middle" dominant-baseline="central" font-weight="bold">H=210</text><rect x="514.0" y="266.7" width="17" height="5.6" rx="1.5" fill="#fff" stroke="#ddd" stroke-width="0.5"/><text x="522.5" y="269.5" font-size="3.9" fill="#1a1a1a" text-anchor="middle" dominant-baseline="central" font-weight="bold">H=210</text><g transform="rotate(-90 560 281)"><rect x="551.5" y="278.2" width="17" height="5.6" rx="1.5" fill="#fff" stroke="#ddd" stroke-width="0.5"/><text x="560" y="281" font-size="3.9" fill="#1a1a1a" text-anchor="middle" dominant-baseline="central" font-weight="bold">H=210</text></g><g fill="none" stroke="#bdbdbd" stroke-width="0.6"><rect x="440" y="141" width="26.5" height="53.3"/><rect x="442.4" y="167.7" width="22.6" height="24.4"/><path d="M449 151L456 160M451 150L458 159"/><path d="M453 180l2.2 -2.2l2.2 2.2l-2.2 2.2z" stroke="#999"/><path d="M459.5 177.5a2.3 2.3 0 1 1 0.01 0M460 182.5v1" stroke="#999"/><rect x="431.2" y="218.9" width="35.5" height="35.7"/><rect x="433.9" y="221.5" width="30.6" height="31.9"/><circle cx="448.5" cy="237" r="4"/><circle cx="459.5" cy="246.8" r="1.8"/><path d="M457 245L438 226M457 245L445 224.5M457 245L452.5 225M458 244.5L459.5 225M457 245L436.5 233.5M457 246L436.5 241.5M456 247L437 247.5"/><path d="M471.5 155.3H482A6.5 6.5 0 0 1 482 168.3H471.5"/><path d="M473 158H481A3.5 3.5 0 0 1 481 165.5H473"/><path d="M543.5 151H532A9 8.6 0 0 0 532 168.3H543.5"/><path d="M538 155H533A4 4.6 0 0 0 533 164.3H538"/><rect x="540.5" y="150" width="4" height="20"/><rect x="471.3" y="183.5" width="27" height="54.1"/><rect x="476.7" y="186.7" width="19.4" height="22.7"/><path d="M481 222L488 229M483 221L490 228"/><path d="M483.5 195.5l2.2 2.2l-2.2 2.2l-2.2 -2.2z" stroke="#999"/><circle cx="478.5" cy="197.8" r="1.3" stroke="#aaa"/><path d="M475.5 161.8l1.8 -1.8l1.8 1.8l-1.8 1.8z" stroke="#aaa"/></g><path d="M604.3 140.4V248.1M608.3 140.4V248.1M550.5 173.4H604.3M550.5 181.4H604.3M550.5 189.5H604.3M550.5 198.2H604.3M550.5 206.7H604.3M550.5 214.8H604.3M550.5 248.1H604.3M550.5 222.8H568.5M586.5 222.8H604.3M550.5 231.3H569M585.5 231.3H604.3M550.5 239.4H569M585.5 239.4H604.3M608.3 148.1H630.5M640 148.1H662.3M608.3 157.2H626M643.5 157.2H662.3M608.3 165.3H621M647.5 165.3H662.3M608.3 173.4H662.3M608.3 181.4H662.3M608.3 190.1H662.3M608.3 198.2H662.3M608.3 206.7H662.3M608.3 214.8H662.3M608.3 248.1H662.3" stroke="#5b9be0" stroke-width="0.7" fill="none"/><path d="M634.9 144V169.3M628 164.5L634.9 169.8L641.8 164.5M577.3 218.8V245M571.8 222.8L577.3 218.5L582.8 222.8" stroke="#5b9be0" stroke-width="0.7" fill="none"/><rect x="368.75" y="208.39999999999998" width="16.5" height="6.6" rx="2" fill="#fff" stroke="#b5d0ee" stroke-width="0.6"/><text x="377" y="211.89999999999998" font-size="4.3" fill="#2f86dd" text-anchor="middle" dominant-baseline="central" font-weight="bold">H=270</text><rect x="364.84999999999997" y="215.89999999999998" width="24.7" height="6.6" rx="2" fill="#fff" stroke="#f0b5c2" stroke-width="0.6"/><text x="377.2" y="219.39999999999998" font-size="4.3" fill="#e0234d" text-anchor="middle" dominant-baseline="central" font-weight="bold">S=12.20 m²</text><rect x="499.75" y="190.5" width="16.5" height="6.6" rx="2" fill="#fff" stroke="#b5d0ee" stroke-width="0.6"/><text x="508" y="194.0" font-size="4.3" fill="#2f86dd" text-anchor="middle" dominant-baseline="central" font-weight="bold">H=270</text><rect x="498.0" y="197.89999999999998" width="22" height="6.6" rx="2" fill="#fff" stroke="#f0b5c2" stroke-width="0.6"/><text x="509" y="201.39999999999998" font-size="4.3" fill="#e0234d" text-anchor="middle" dominant-baseline="central" font-weight="bold">S=4.24 m²</text><rect x="597.75" y="214.7" width="16.5" height="6.6" rx="2" fill="#fff" stroke="#b5d0ee" stroke-width="0.6"/><text x="606" y="218.2" font-size="4.3" fill="#2f86dd" text-anchor="middle" dominant-baseline="central" font-weight="bold">H=270</text><rect x="595.0" y="221.7" width="22" height="6.6" rx="2" fill="#fff" stroke="#f0b5c2" stroke-width="0.6"/><text x="606" y="225.2" font-size="4.3" fill="#e0234d" text-anchor="middle" dominant-baseline="central" font-weight="bold">S=6.03 m²</text><rect x="472.75" y="273.7" width="16.5" height="6.6" rx="2" fill="#fff" stroke="#b5d0ee" stroke-width="0.6"/><text x="481" y="277.2" font-size="4.3" fill="#2f86dd" text-anchor="middle" dominant-baseline="central" font-weight="bold">H=270</text><rect x="469.5" y="280.9" width="22" height="6.6" rx="2" fill="#fff" stroke="#f0b5c2" stroke-width="0.6"/><text x="480.5" y="284.4" font-size="4.3" fill="#e0234d" text-anchor="middle" dominant-baseline="central" font-weight="bold">S=2.89 m²</text><rect x="381.75" y="408.2" width="16.5" height="6.6" rx="2" fill="#fff" stroke="#b5d0ee" stroke-width="0.6"/><text x="390" y="411.7" font-size="4.3" fill="#2f86dd" text-anchor="middle" dominant-baseline="central" font-weight="bold">H=270</text><rect x="377.65" y="415.4" width="24.7" height="6.6" rx="2" fill="#fff" stroke="#f0b5c2" stroke-width="0.6"/><text x="390" y="418.9" font-size="4.3" fill="#e0234d" text-anchor="middle" dominant-baseline="central" font-weight="bold">S=19.86 m²</text><rect x="568.35" y="408.2" width="16.5" height="6.6" rx="2" fill="#fff" stroke="#b5d0ee" stroke-width="0.6"/><text x="576.6" y="411.7" font-size="4.3" fill="#2f86dd" text-anchor="middle" dominant-baseline="central" font-weight="bold">H=270</text><rect x="564.25" y="415.4" width="24.7" height="6.6" rx="2" fill="#fff" stroke="#f0b5c2" stroke-width="0.6"/><text x="576.6" y="418.9" font-size="4.3" fill="#e0234d" text-anchor="middle" dominant-baseline="central" font-weight="bold">S=19.09 m²</text><rect x="348.0" y="121.2" width="52" height="5.2" rx="1" fill="#fff" stroke="#d0d0d0" stroke-width="0.5"/><text x="351.0" y="123.8" font-size="3.9" fill="#333" text-anchor="start" dominant-baseline="central" font-weight="bold">H=150</text><text x="364.0" y="123.8" font-size="3.9" fill="#2f86dd" text-anchor="start" dominant-baseline="central" font-weight="normal">H der Fensterbank=95</text><rect x="497.5" y="121.2" width="52" height="5.2" rx="1" fill="#fff" stroke="#d0d0d0" stroke-width="0.5"/><text x="500.5" y="123.8" font-size="3.9" fill="#333" text-anchor="start" dominant-baseline="central" font-weight="bold">H=150</text><text x="513.5" y="123.8" font-size="3.9" fill="#2f86dd" text-anchor="start" dominant-baseline="central" font-weight="normal">H der Fensterbank=95</text><rect x="366.7" y="508.9" width="52" height="5.2" rx="1" fill="#fff" stroke="#d0d0d0" stroke-width="0.5"/><text x="369.7" y="511.5" font-size="3.9" fill="#333" text-anchor="start" dominant-baseline="central" font-weight="bold">H=150</text><text x="382.7" y="511.5" font-size="3.9" fill="#2f86dd" text-anchor="start" dominant-baseline="central" font-weight="normal">H der Fensterbank=95</text><rect x="549.9" y="508.9" width="52" height="5.2" rx="1" fill="#fff" stroke="#d0d0d0" stroke-width="0.5"/><text x="552.9" y="511.5" font-size="3.9" fill="#333" text-anchor="start" dominant-baseline="central" font-weight="bold">H=150</text><text x="565.9" y="511.5" font-size="3.9" fill="#2f86dd" text-anchor="start" dominant-baseline="central" font-weight="normal">H der Fensterbank=95</text><g transform="rotate(-90 652.2 270.4)"><rect x="626.2" y="267.79999999999995" width="52" height="5.2" rx="1" fill="#fff" stroke="#d0d0d0" stroke-width="0.5"/><text x="629.2" y="270.4" font-size="3.9" fill="#333" text-anchor="start" dominant-baseline="central" font-weight="bold">H=150</text><text x="642.2" y="270.4" font-size="3.9" fill="#2f86dd" text-anchor="start" dominant-baseline="central" font-weight="normal">H der Fensterbank=95</text></g></svg><div style="position:absolute;left:866.6px;top:126.2px;width:38.7px;height:13.6px;background:#fff;border-top:1.2px solid #f3b445;box-shadow:0 1px 1.5px rgba(0,0,0,0.2)"></div><div class="t" style="left:871.80px;top:131.24px;font-size:6.8px;color:#444;transform:scaleX(0.9044);-webkit-text-stroke:0.1px #444;">Etage 1</div><svg style="position:absolute;left:895.8000000000001px;top:131.5px" width="5" height="4" viewBox="0 0 5 4"><path d="M0.8 1L2.5 3L4.2 1Z" fill="#666"/></svg><div style="position:absolute;left:909.8px;top:126.2px;width:41.9px;height:13.6px;background:#fff;border-top:1.2px solid #f3b445;box-shadow:0 1px 1.5px rgba(0,0,0,0.2)"></div><div class="t" style="left:915.00px;top:131.24px;font-size:6.8px;color:#444;transform:scaleX(0.9736);-webkit-text-stroke:0.1px #444;">Layout 1</div><svg style="position:absolute;left:942.1999999999999px;top:131.5px" width="5" height="4" viewBox="0 0 5 4"><path d="M0.8 1L2.5 3L4.2 1Z" fill="#666"/></svg><svg style="position:absolute;left:420.8px;top:129.3px" width="9" height="9" viewBox="0 0 9 9"><circle cx="4.5" cy="4.5" r="4.1" fill="#4cae2a"/><text x="4.5" y="7" font-size="6.5" font-weight="bold" text-anchor="middle" fill="#fff" font-family="Liberation Sans">?</text></svg><div class="t" style="left:432.60px;top:129.92px;font-size:8.3px;color:#4a4a4a;transform:scaleX(0.7875);">Wie stellt man die </div><div class="t" style="left:486.00px;top:129.92px;font-size:8.3px;color:#45a826;font-weight:bold;transform:scaleX(0.7983);">Deckenhohe</div><div class="t" style="left:525.60px;top:129.92px;font-size:8.3px;color:#4a4a4a;transform:scaleX(0.7556);"> ein?</div><svg style="position:absolute;left:5px;top:529px" width="13" height="10" viewBox="0 0 13 10"><path d="M4 1.5C6.5 1.5 8 2.8 8 4.3C8 5.8 6.5 7 4.5 7L2.5 8.5L3 6.6C1.8 6.1 1 5.3 1 4.3C1 2.8 2 1.5 4 1.5Z" fill="#fff" stroke="#888" stroke-width="0.7"/><path d="M8 3.3C10 3.6 11.5 4.6 11.5 6C11.5 6.9 11 7.6 10 8L10.5 9.3L8.8 8.4C7.8 8.5 6.5 8.2 6 7.3" fill="#fff" stroke="#888" stroke-width="0.7"/></svg><div class="t" style="left:20.00px;top:532.38px;font-size:6.5px;color:#3aa31d;font-weight:bold;transform:scaleX(0.7962);-webkit-text-stroke:0.2px #3aa31d;">STELLEN SIE IHRE FRAGE ONLINE</div><div style="position:absolute;left:114.3px;top:532.3px;width:4px;height:4px;background:#3aa31d;border-radius:50%"></div><div class="t" style="left:799.70px;top:531.93px;font-size:6.6px;color:#2e6f9f;font-weight:bold;transform:scaleX(0.9006);-webkit-text-stroke:0.15px #2e6f9f;">Hot-Tasten</div><div style="position:absolute;left:800px;top:537.4px;width:30px;height:0px;border-top:0.6px dotted #b9cfdf"></div><div style="position:absolute;left:838px;top:533.6px;width:6px;height:0.9px;background:#bbb"></div><div style="position:absolute;left:852px;top:532.2px;width:49px;height:3.8px;background:#a6e08a;border:0.6px solid #7bcf5a;border-radius:2px"></div><div style="position:absolute;left:854.8px;top:530.5px;width:7.4px;height:7.4px;background:#fff;border:0.8px solid #6cc24a;border-radius:50%"></div><svg style="position:absolute;left:907.5px;top:530px" width="8" height="8" viewBox="0 0 8 8"><path d="M4 1V7M1 4H7" stroke="#bbb" stroke-width="0.9"/></svg><div style="position:absolute;left:933.4px;top:519.3px;width:8.4px;height:9px;background:#fff;border:0.6px solid #d6d6d6"></div><svg style="position:absolute;left:933.4px;top:519.5999999999999px" width="8.4" height="8.4" viewBox="0 0 8.4 8.4"><path d="M4.2 1.5V7M2.5 3.5L4.2 1.5L5.9 3.5" fill="none" stroke="#444" stroke-width="1.3"/></svg><div style="position:absolute;left:933.4px;top:529.3px;width:8.4px;height:9px;background:#fff;border:0.6px solid #d6d6d6"></div><svg style="position:absolute;left:933.4px;top:529.5999999999999px" width="8.4" height="8.4" viewBox="0 0 8.4 8.4"><path d="M4.2 1.5V7M2.5 5L4.2 7L5.9 5" fill="none" stroke="#444" stroke-width="1.3"/></svg><div style="position:absolute;left:922.5px;top:529.3px;width:8.4px;height:9px;background:#fff;border:0.6px solid #d6d6d6"></div><svg style="position:absolute;left:922.5px;top:529.5999999999999px" width="8.4" height="8.4" viewBox="0 0 8.4 8.4"><path d="M1.5 4.2H7M3.5 2.5L1.5 4.2L3.5 5.9" fill="none" stroke="#444" stroke-width="1.3"/></svg><div style="position:absolute;left:944.2px;top:529.3px;width:8.4px;height:9px;background:#fff;border:0.6px solid #d6d6d6"></div><svg style="position:absolute;left:944.2px;top:529.5999999999999px" width="8.4" height="8.4" viewBox="0 0 8.4 8.4"><path d="M1.5 4.2H7M5 2.5L7 4.2L5 5.9" fill="none" stroke="#444" stroke-width="1.3"/></svg><div style="position:absolute;left:0px;top:126.6px;width:39.5px;height:236.1px;background:#393939;border-right:1.5px solid #1e1e1e;border-bottom:1px solid #1e1e1e;border-top-right-radius:2px;border-bottom-right-radius:2px;box-shadow:0 0 1px rgba(0,0,0,.4)"></div><div style="position:absolute;left:0px;top:126.6px;width:20px;height:236.1px;background:#444444"></div><div style="position:absolute;left:0px;top:145.29999999999998px;width:38px;height:0.8px;background:#303030"></div><div style="position:absolute;left:0px;top:163.32999999999998px;width:38px;height:0.8px;background:#303030"></div><div style="position:absolute;left:0px;top:181.35999999999999px;width:38px;height:0.8px;background:#303030"></div><div style="position:absolute;left:0px;top:199.39px;width:38px;height:0.8px;background:#303030"></div><div style="position:absolute;left:0px;top:217.42px;width:38px;height:0.8px;background:#303030"></div><div style="position:absolute;left:0px;top:235.45px;width:38px;height:0.8px;background:#303030"></div><div style="position:absolute;left:0px;top:253.48px;width:38px;height:0.8px;background:#303030"></div><div style="position:absolute;left:0px;top:271.51px;width:38px;height:0.8px;background:#303030"></div><div style="position:absolute;left:0px;top:289.54px;width:38px;height:0.8px;background:#303030"></div><div style="position:absolute;left:0px;top:307.57000000000005px;width:38px;height:0.8px;background:#303030"></div><div style="position:absolute;left:0px;top:325.6px;width:38px;height:0.8px;background:#303030"></div><div style="position:absolute;left:0px;top:343.63px;width:38px;height:0.8px;background:#303030"></div><div style="position:absolute;left:0px;top:344.03px;width:20px;height:18.670000000000016px;background:#3586a8"></div><div style="position:absolute;left:20px;top:344.03px;width:18px;height:18.670000000000016px;background:#2c7ba0"></div><div style="position:absolute;left:0;top:0;width:38px;height:564px;overflow:hidden"><div class="t" style="left:27.70px;top:134.39px;font-size:6.9px;color:#f0f0f0;-webkit-text-stroke:0.08px #f0f0f0;">Fenster</div><div class="t" style="left:27.70px;top:153.49px;font-size:6.9px;color:#f0f0f0;-webkit-text-stroke:0.08px #f0f0f0;">Türen</div><div class="t" style="left:27.70px;top:171.52px;font-size:6.9px;color:#f0f0f0;-webkit-text-stroke:0.08px #f0f0f0;">Treppen</div><div class="t" style="left:27.70px;top:189.55px;font-size:6.9px;color:#f0f0f0;-webkit-text-stroke:0.08px #f0f0f0;">Konstruktion</div><div class="t" style="left:27.70px;top:207.58px;font-size:6.9px;color:#f0f0f0;-webkit-text-stroke:0.08px #f0f0f0;">Trennwand</div><div class="t" style="left:27.70px;top:225.61px;font-size:6.9px;color:#f0f0f0;-webkit-text-stroke:0.08px #f0f0f0;">Trennwand</div><div class="t" style="left:27.70px;top:243.64px;font-size:6.9px;color:#f0f0f0;-webkit-text-stroke:0.08px #f0f0f0;">Ziegel</div><div class="t" style="left:27.70px;top:261.67px;font-size:6.9px;color:#f0f0f0;-webkit-text-stroke:0.08px #f0f0f0;">Gipskarton</div><div class="t" style="left:27.70px;top:279.70px;font-size:6.9px;color:#8a8a8a;-webkit-text-stroke:0.08px #8a8a8a;">Glas</div><div class="t" style="left:27.70px;top:297.73px;font-size:6.9px;color:#8a8a8a;-webkit-text-stroke:0.08px #8a8a8a;">Lamellen</div><div class="t" style="left:27.70px;top:315.76px;font-size:6.9px;color:#f0f0f0;-webkit-text-stroke:0.08px #f0f0f0;">Gipsplatten</div><div class="t" style="left:27.70px;top:333.79px;font-size:6.9px;color:#f0f0f0;-webkit-text-stroke:0.08px #f0f0f0;">Deckenhöhe</div><div class="t" style="left:27.70px;top:351.82px;font-size:6.9px;color:#f0f0f0;-webkit-text-stroke:0.08px #f0f0f0;">Der Planer</div></div><svg style="position:absolute;left:1.5px;top:128.4px" width="16" height="16" viewBox="0 0 16 16"><rect x="4" y="3" width="8" height="10" fill="none" stroke="#e8e8e8" stroke-width="0.9"/><path d="M8 3V13M4 13L3 14H13L12 13" fill="none" stroke="#e8e8e8" stroke-width="0.8"/><path d="M8.5 11L11 8" stroke="#e8e8e8" stroke-width="0.7"/></svg><svg style="position:absolute;left:1.5px;top:147.5px" width="16" height="16" viewBox="0 0 16 16"><rect x="5" y="3" width="6.5" height="10.5" fill="#f0f0f0" stroke="#e8e8e8" stroke-width="0.8"/><rect x="6.2" y="4" width="3.6" height="8.5" fill="#777"/></svg><svg style="position:absolute;left:1.5px;top:165.53px" width="16" height="16" viewBox="0 0 16 16"><path d="M2.5 10L9 3.5L13.5 6.5V9L7 14L2.5 12.5Z" fill="none" stroke="#e8e8e8" stroke-width="0.9"/><path d="M4 10.5L10 5M5 12L11 6.5M3 11.5L6 13" stroke="#e8e8e8" stroke-width="0.6"/></svg><svg style="position:absolute;left:1.5px;top:183.56px" width="16" height="16" viewBox="0 0 16 16"><rect x="4" y="4" width="8" height="8.5" fill="none" stroke="#e8e8e8" stroke-width="0.8"/><path d="M6.5 6V10M9 6V10" stroke="#e8e8e8" stroke-width="0.7"/></svg><svg style="position:absolute;left:1.5px;top:201.59px" width="16" height="16" viewBox="0 0 16 16"><g fill="none" stroke="#4b93e0" stroke-width="1.1"><path d="M3.5 5Q5 4 6.5 5T9.5 5T12.5 5M3.5 8Q5 7 6.5 8T9.5 8T12.5 8M3.5 11Q5 10 6.5 11T9.5 11T12.5 11M5 4.5V11.5M8 4.5V11.5M11 4.5V11.5"/></g></svg><svg style="position:absolute;left:1.5px;top:219.62px" width="16" height="16" viewBox="0 0 16 16"><g fill="none" stroke="#38c0a0" stroke-width="1.1"><path d="M3.5 5Q5 4 6.5 5T9.5 5T12.5 5M3.5 8Q5 7 6.5 8T9.5 8T12.5 8M3.5 11Q5 10 6.5 11T9.5 11T12.5 11M5 4.5V11.5M8 4.5V11.5M11 4.5V11.5"/></g></svg><svg style="position:absolute;left:1.5px;top:237.65px" width="16" height="16" viewBox="0 0 16 16"><g fill="none" stroke="#e86a30" stroke-width="1.1"><path d="M3.5 5Q5 4 6.5 5T9.5 5T12.5 5M3.5 8Q5 7 6.5 8T9.5 8T12.5 8M3.5 11Q5 10 6.5 11T9.5 11T12.5 11M5 4.5V11.5M8 4.5V11.5M11 4.5V11.5"/></g></svg><svg style="position:absolute;left:1.5px;top:255.68px" width="16" height="16" viewBox="0 0 16 16"><g fill="none" stroke="#b860e0" stroke-width="1.1"><path d="M3.5 5Q5 4 6.5 5T9.5 5T12.5 5M3.5 8Q5 7 6.5 8T9.5 8T12.5 8M3.5 11Q5 10 6.5 11T9.5 11T12.5 11M5 4.5V11.5M8 4.5V11.5M11 4.5V11.5"/></g></svg><svg style="position:absolute;left:1.5px;top:273.71px" width="16" height="16" viewBox="0 0 16 16"><rect x="3.5" y="4" width="9" height="8.5" rx="1" fill="none" stroke="#e8e8e8" stroke-width="0.8"/><path d="M3.5 7L12.5 5M3.5 10.5L12.5 8M6 12.5L12.5 10" stroke="#e8e8e8" stroke-width="0.6"/></svg><svg style="position:absolute;left:1.5px;top:291.74px" width="16" height="16" viewBox="0 0 16 16"><rect x="3.5" y="4" width="2.6" height="9" rx="1" fill="none" stroke="#bbb" stroke-width="0.8"/><rect x="6.8" y="4" width="2.6" height="9" rx="1" fill="none" stroke="#bbb" stroke-width="0.8"/><rect x="10.1" y="4" width="2.6" height="9" rx="1" fill="none" stroke="#bbb" stroke-width="0.8"/></svg><svg style="position:absolute;left:1.5px;top:309.77000000000004px" width="16" height="16" viewBox="0 0 16 16"><rect x="4" y="4" width="8.5" height="8.5" fill="none" stroke="#e8e8e8" stroke-width="0.8"/><path d="M5.5 11L11 5.5M6 6.5A1 1 0 1 0 6.01 6.5M10.5 10.5A1 1 0 1 0 10.51 10.5" fill="none" stroke="#e8e8e8" stroke-width="0.7"/></svg><svg style="position:absolute;left:1.5px;top:327.8px" width="16" height="16" viewBox="0 0 16 16"><rect x="4" y="4" width="8" height="8" fill="none" stroke="#e8e8e8" stroke-width="0.8" stroke-dasharray="1.5 1"/><circle cx="4" cy="4" r="1" fill="#e8e8e8"/><circle cx="12" cy="4" r="1" fill="#e8e8e8"/><circle cx="4" cy="12" r="1" fill="#e8e8e8"/><circle cx="12" cy="12" r="1" fill="#e8e8e8"/></svg><svg style="position:absolute;left:1.5px;top:345.83px" width="16" height="16" viewBox="0 0 16 16"><text x="8" y="12.5" font-size="11" font-weight="bold" text-anchor="middle" fill="#fff" font-family="Liberation Sans">?</text></svg><div style="position:absolute;left:0px;top:0px;width:960px;height:21px;background:#1c1b22"></div><div style="position:absolute;left:0px;top:21px;width:960px;height:35px;background:#2b2a33"></div><svg style="position:absolute;left:4px;top:5px" width="14" height="12" viewBox="0 0 14 12"><rect x="2.5" y="3.5" width="8" height="6.5" rx="1" fill="none" stroke="#e8e8ec" stroke-width="1"/><path d="M3.5 1.8H9.5" stroke="#e8e8ec" stroke-width="1"/><path d="M5.5 6H7.5" stroke="#e8e8ec" stroke-width="0.8"/></svg><div style="position:absolute;left:21.5px;top:0px;width:1px;height:21px;background:#33323a"></div><div style="position:absolute;left:23.5px;top:2px;width:110.5px;height:17.8px;background:#51505c;border-radius:2px"></div><div style="position:absolute;left:27.3px;top:7.8px;width:8px;height:6px;background:#7cc3f0;border-radius:1px"></div><div class="t" style="left:38.10px;top:8.30px;font-size:7.3px;color:#fbfbfe;transform:scaleX(0.8327);">Online Grundrissplaner und De</div><div style="position:absolute;left:110px;top:4px;width:14px;height:14px;background:linear-gradient(90deg,rgba(81,80,92,0),#51505c 85%)"></div><svg style="position:absolute;left:122px;top:7px" width="8" height="8" viewBox="0 0 8 8"><path d="M2 2L6 6M6 2L2 6" stroke="#fbfbfe" stroke-width="1"/></svg><div style="position:absolute;left:139.8px;top:7.5px;width:8px;height:7.4px;background:linear-gradient(135deg,#ddd,#aaa 50%,#eee)"></div><div class="t" style="left:150.90px;top:8.30px;font-size:7.3px;color:#fbfbfe;transform:scaleX(0.7925);">Bereichskalender</div><svg style="position:absolute;left:234.7px;top:7px" width="8" height="8" viewBox="0 0 8 8"><path d="M2 2L6 6M6 2L2 6" stroke="#fbfbfe" stroke-width="1"/></svg><svg style="position:absolute;left:253px;top:7px" width="9" height="9" viewBox="0 0 9 9"><path d="M4.5 1V8M1 4.5H8" stroke="#fbfbfe" stroke-width="0.9"/></svg><svg style="position:absolute;left:856px;top:7px" width="10" height="8" viewBox="0 0 10 8"><path d="M2 2.5L5 5.5L8 2.5" fill="none" stroke="#fbfbfe" stroke-width="0.9"/></svg><div style="position:absolute;left:900px;top:11px;width:5px;height:0.9px;background:#fbfbfe"></div><svg style="position:absolute;left:921px;top:7px" width="9" height="9" viewBox="0 0 9 9"><rect x="1.5" y="2.5" width="5" height="5" fill="none" stroke="#fbfbfe" stroke-width="0.8"/><path d="M3 2.5V1.2H7.8V6H6.5" fill="none" stroke="#fbfbfe" stroke-width="0.8"/></svg><svg style="position:absolute;left:944px;top:7px" width="9" height="9" viewBox="0 0 9 9"><path d="M1.5 1.5L7.5 7.5M7.5 1.5L1.5 7.5" stroke="#fbfbfe" stroke-width="0.9"/></svg><svg style="position:absolute;left:6px;top:27px" width="12" height="10" viewBox="0 0 12 10"><path d="M2 5H10M2 5L5.5 1.8M2 5L5.5 8.2" fill="none" stroke="#fbfbfe" stroke-width="1.1"/></svg><svg style="position:absolute;left:24px;top:27px" width="12" height="10" viewBox="0 0 12 10"><path d="M10 5H2M10 5L6.5 1.8M10 5L6.5 8.2" fill="none" stroke="#fbfbfe" stroke-width="1.1"/></svg><svg style="position:absolute;left:42px;top:27px" width="12" height="11" viewBox="0 0 12 11"><path d="M8.6 3.5A3.8 3.8 0 1 0 9.6 6.5" fill="none" stroke="#fbfbfe" stroke-width="1.1"/><path d="M7.2 1.5L10 1.5L10 4.5Z" fill="#fbfbfe"/></svg><svg style="position:absolute;left:60px;top:27px" width="12" height="11" viewBox="0 0 12 11"><path d="M2 5.2L6 1.6L10 5.2V9.2H2Z" fill="none" stroke="#fbfbfe" stroke-width="1.1"/><path d="M5 9V6.8H7V9" fill="none" stroke="#fbfbfe" stroke-width="0.8"/></svg><div style="position:absolute;left:134px;top:24px;width:728px;height:16px;background:#1c1b22;border-radius:2px"></div><svg style="position:absolute;left:136px;top:27px" width="11" height="11" viewBox="0 0 11 11"><path d="M5.5 1L9.5 2.5V5.5C9.5 8 7.5 9.5 5.5 10C3.5 9.5 1.5 8 1.5 5.5V2.5Z" fill="none" stroke="#61a8e6" stroke-width="1"/></svg><svg style="position:absolute;left:150px;top:27px" width="11" height="11" viewBox="0 0 11 11"><rect x="2" y="4.8" width="7" height="5" rx="1" fill="none" stroke="#fbfbfe" stroke-width="1"/><path d="M3.5 4.8V3.3A2 2 0 0 1 7.5 3.3V4.8" fill="none" stroke="#fbfbfe" stroke-width="1"/></svg><div class="t" style="left:164.60px;top:29.46px;font-size:7.8px;color:#fbfbfe;transform:scaleX(0.8869);-webkit-text-stroke:0.12px #fff;">remplanner.com</div><div class="t" style="left:214.20px;top:29.46px;font-size:7.8px;color:#a4a4ac;transform:scaleX(0.9442);">/de/planner/</div><svg style="position:absolute;left:848px;top:26px" width="12" height="12" viewBox="0 0 12 12"><path d="M6 1.5L7.3 4.4L10.4 4.6L8 6.6L8.8 9.7L6 8L3.2 9.7L4 6.6L1.6 4.6L4.7 4.4Z" fill="none" stroke="#fbfbfe" stroke-width="0.9"/></svg><svg style="position:absolute;left:924px;top:26px" width="12" height="12" viewBox="0 0 12 12"><path d="M2.5 9.5V5.5L6 2.3L9.5 5.5V9.5Z M5 9.5V7" fill="none" stroke="#fbfbfe" stroke-width="1"/></svg><svg style="position:absolute;left:943px;top:27px" width="10" height="10" viewBox="0 0 10 10"><path d="M1.5 2.5H8.5M1.5 5H8.5M1.5 7.5H8.5" stroke="#fbfbfe" stroke-width="1"/></svg><svg style="position:absolute;left:5px;top:44px" width="10" height="10" viewBox="0 0 10 10"><rect x="3" y="1.5" width="6" height="7" rx="1" fill="none" stroke="#e6e6ea" stroke-width="0.8"/><path d="M0.5 5H6M4.2 3.3L6 5L4.2 6.7" fill="none" stroke="#e6e6ea" stroke-width="0.8"/></svg><div class="t" style="left:16.00px;top:45.90px;font-size:7.3px;color:#e6e6ea;transform:scaleX(0.8042);">Lesezeichen importier...</div><div style="position:absolute;left:0px;top:56px;width:960px;height:15.7px;background:#262626;border-top:1px solid #1d1d1d;border-bottom:1px solid #303030"></div><div style="position:absolute;left:0px;top:71.7px;width:960px;height:24.3px;background:#121212;border-bottom:2.5px solid #060606"></div><svg style="position:absolute;left:9px;top:60px" width="9" height="9" viewBox="0 0 9 9"><circle cx="4.5" cy="4.5" r="3.8" fill="none" stroke="#bbb" stroke-width="0.8"/><circle cx="4.5" cy="3.6" r="1.4" fill="none" stroke="#bbb" stroke-width="0.7"/><path d="M2.2 7.2A2.6 2 0 0 1 6.8 7.2" fill="none" stroke="#bbb" stroke-width="0.7"/></svg><div class="t" style="left:22.10px;top:62.51px;font-size:5.6px;color:#e6e6e6;font-weight:bold;transform:scaleX(0.9493);-webkit-text-stroke:0.2px #e6e6e6;">EINLOGGEN</div><div style="position:absolute;left:61.6px;top:60px;width:0.8px;height:8px;background:#4a4a4a"></div><div class="t" style="left:69.00px;top:62.51px;font-size:5.6px;color:#c4c4c4;font-weight:bold;transform:scaleX(0.9421);-webkit-text-stroke:0.2px #c4c4c4;">EIN NEUES KONTO REGISTRIEREN</div><div style="position:absolute;left:100px;top:71px;width:48px;height:2px;background:#e9a21a"></div><svg style="position:absolute;left:846px;top:59px" width="8" height="9" viewBox="0 0 8 9"><path d="M4 8.2C2 5.8 1.2 4.6 1.2 3.4A2.8 2.8 0 0 1 6.8 3.4C6.8 4.6 6 5.8 4 8.2Z" fill="none" stroke="#cfcfcf" stroke-width="0.8"/><circle cx="4" cy="3.4" r="1" fill="none" stroke="#cfcfcf" stroke-width="0.6"/></svg><div class="t" style="left:855.80px;top:61.28px;font-size:6.7px;color:#dcdcdc;transform:scaleX(1.0075);-webkit-text-stroke:0.15px #dcdcdc;">Papenreye 51, 22453 Hamburg</div><div class="t" style="left:10.20px;top:76.70px;font-size:10.2px;color:#f5a81c;font-weight:bold;transform:scaleX(1.1162);-webkit-text-stroke:0.5px #f5a81c;">REM</div><div class="t" style="left:35.50px;top:76.70px;font-size:10.2px;color:#ffffff;font-weight:bold;transform:scaleX(1.0080);-webkit-text-stroke:0.5px #fff;">PLANNER</div><div class="t" style="left:25.00px;top:87.60px;font-size:4.8px;color:#e0e0e0;transform:scaleX(1.0235);-webkit-text-stroke:0.15px #e0e0e0;">PLAN AND DESIGN</div><div style="position:absolute;left:10.3px;top:88.1px;width:12px;height:0.7px;background:#f5a81c"></div><div style="position:absolute;left:72px;top:88.1px;width:13px;height:0.7px;background:#ddd"></div><div style="position:absolute;left:10px;top:87px;width:1px;height:2.8px;background:#f5a81c"></div><div style="position:absolute;left:84.5px;top:87px;width:1px;height:2.8px;background:#ddd"></div><div class="t" style="left:110.20px;top:82.10px;font-size:7.7px;color:#f0a818;font-weight:bold;transform:scaleX(0.7589);-webkit-text-stroke:0.3px #f0a818;">PROJEKT</div><div class="t" style="left:160.00px;top:82.10px;font-size:7.7px;color:#f2f2f2;font-weight:bold;transform:scaleX(0.8402);-webkit-text-stroke:0.3px #f2f2f2;">FUNKTIONEN UND PREISE</div><div class="t" style="left:266.25px;top:82.10px;font-size:7.7px;color:#f2f2f2;font-weight:bold;transform:scaleX(0.8292);-webkit-text-stroke:0.3px #f2f2f2;">UNTERSTÜTZUNG</div><div class="t" style="left:345.50px;top:82.10px;font-size:7.7px;color:#f2f2f2;font-weight:bold;transform:scaleX(0.8154);-webkit-text-stroke:0.3px #f2f2f2;">GRUNDRISS SOFTWARE</div><div class="t" style="left:442.50px;top:82.10px;font-size:7.7px;color:#f2f2f2;font-weight:bold;transform:scaleX(0.8293);-webkit-text-stroke:0.3px #f2f2f2;">KONTAKTE</div><div class="t" style="left:826.10px;top:79.34px;font-size:12px;color:#d0d0d0;transform:scaleX(0.8785);">+49 176</div><div class="t" style="left:867.40px;top:79.34px;font-size:12px;color:#ffffff;font-weight:bold;transform:scaleX(0.9140);">57329212</div><div style="position:absolute;left:921.3px;top:77.2px;width:28.1px;height:12.5px;background:#262626;border:0.6px solid #3a3a3a;border-radius:2px"></div><div style="position:absolute;left:925.2px;top:82px;width:8.2px;height:1.8px;background:#000"></div><div style="position:absolute;left:925.2px;top:83.8px;width:8.2px;height:1.8px;background:#dd0000"></div><div style="position:absolute;left:925.2px;top:85.6px;width:8.2px;height:1.8px;background:#ffce00"></div><div class="t" style="left:937.30px;top:83.00px;font-size:5px;color:#ffffff;font-weight:bold;transform:scaleX(1.0510);">DE</div><div style="position:absolute;left:0px;top:96px;width:960px;height:24px;background:#f6f6f6;border-top:1px solid #fff;border-bottom:1px solid #d3d3d3"></div><svg style="position:absolute;left:9px;top:100px" width="14" height="15" viewBox="0 0 14 15"><path d="M1.5 1.5H10L12.5 4V13.5H1.5Z" fill="#fafafa" stroke="#6a6a6a" stroke-width="1"/><rect x="3.5" y="1.5" width="6" height="3.5" fill="none" stroke="#6a6a6a" stroke-width="0.8"/><rect x="3.3" y="8" width="7.4" height="5.5" fill="#ddd" stroke="#6a6a6a" stroke-width="0.8"/></svg><svg style="position:absolute;left:30px;top:100px" width="12" height="15" viewBox="0 0 12 15"><path d="M1.5 1.5H7.5L10.5 4.5V13.5H1.5Z" fill="#fafafa" stroke="#999" stroke-width="0.9"/><path d="M4.5 6L7.5 9.5L6 10L6.5 12L5 11L4.5 6Z" fill="#555"/></svg><svg style="position:absolute;left:49px;top:100px" width="15" height="15" viewBox="0 0 15 15"><rect x="3.5" y="1.5" width="8" height="4" fill="#fff" stroke="#6a6a6a" stroke-width="0.9"/><path d="M8 2.3H12.5" stroke="#e33" stroke-width="1"/><rect x="1.3" y="5" width="12.4" height="5.5" rx="1" fill="#f2f2f2" stroke="#6a6a6a" stroke-width="1"/><rect x="3.5" y="8.5" width="8" height="5" fill="#e6e6e6" stroke="#888" stroke-width="0.9"/><path d="M3 6.8H12" stroke="#aaa" stroke-width="0.6"/></svg><div style="position:absolute;left:68.5px;top:96px;width:77.7px;height:24px;background:#fff;box-shadow:0 1px 2px rgba(0,0,0,0.25);border:0.5px solid #ddd;border-top:none"></div><svg style="position:absolute;left:74px;top:99px" width="19" height="16" viewBox="0 0 19 16"><rect x="4" y="2.6" width="11" height="10.4" fill="#fff" stroke="#555" stroke-width="0.8"/><rect x="1.3" y="1.3" width="3.2" height="12" rx="1.4" fill="#e8e8e8" stroke="#444" stroke-width="0.9"/><rect x="14.5" y="1.3" width="3.2" height="12" rx="1.4" fill="#e8e8e8" stroke="#444" stroke-width="0.9"/><path d="M1.5 12.5H4.5M14.5 12.5H17.5" stroke="#333" stroke-width="1.4"/><path d="M6.5 4.5V8.5H9M9 6.5H12.5V11H7.5M6 10.5H8" fill="none" stroke="#666" stroke-width="0.7"/><path d="M4 14.3H15" stroke="#bbb" stroke-width="0.6"/></svg><svg style="position:absolute;left:98.5px;top:100px" width="18" height="15" viewBox="0 0 18 15"><path d="M1 1H17V11.5L14.5 14H1Z" fill="#fafafa" stroke="#bdbdbd" stroke-width="0.8"/><path d="M14.5 14V11.5H17" fill="none" stroke="#bdbdbd" stroke-width="0.7"/><path d="M3.5 4.5H6M3.5 6H7M4 3L5 2.5M11 3.5A1.6 1.6 0 1 1 11.5 6.5V8.5M3 9.5H13M3 11.5H12" fill="none" stroke="#c2c2c2" stroke-width="0.7"/></svg><svg style="position:absolute;left:123px;top:98.5px" width="18" height="17.5" viewBox="0 0 18 17.5"><path d="M9 1L16.3 5V12.5L9 16.5L1.7 12.5V5Z" fill="#fafafa" stroke="#c4c4c4" stroke-width="0.8"/><path d="M9 1.5V8.5L2 12.3M9 8.5L16 12.3M4 6.5V11L9 14L14 11V6.5M4 11L9 8.5L14 11" fill="none" stroke="#d0d0d0" stroke-width="0.6"/></svg><div style="position:absolute;left:77.1px;top:116.5px;width:12.1px;height:8.3px;background:#ee8a10;border-radius:1.2px"></div><div class="t" style="left:78.90px;top:117.83px;font-size:6.4px;color:#fff;font-weight:bold;transform:scaleX(1.0389);-webkit-text-stroke:0.15px #fff;">2D</div><div style="position:absolute;left:95.7px;top:116.5px;width:23.5px;height:8.3px;background:#fff;border:0.6px solid #d0d0d0;border-radius:1.5px"></div><div class="t" style="left:97.80px;top:117.83px;font-size:6.4px;color:#505050;transform:scaleX(0.9370);-webkit-text-stroke:0.1px #505050;">Wände</div><div style="position:absolute;left:125.7px;top:116.5px;width:11.4px;height:8.3px;background:#fff;border:0.6px solid #d0d0d0;border-radius:1.5px"></div><div class="t" style="left:127.60px;top:117.83px;font-size:6.4px;color:#505050;transform:scaleX(0.9289);-webkit-text-stroke:0.1px #505050;">3D</div><svg style="position:absolute;left:152px;top:101px" width="14" height="13" viewBox="0 0 14 13"><path d="M1.5 8.5L8 2L12 6L5.5 12.5Z" fill="#fafafa" stroke="#6a6a6a" stroke-width="0.9"/><path d="M4 9L5 10M6 7L7.5 8.5M8 5L9 6" stroke="#6a6a6a" stroke-width="0.7"/><path d="M7 12.3H13M8.5 10.5V12.3M10.5 10.5V12.3M12.5 9.5V12.3" stroke="#6a6a6a" stroke-width="0.7"/></svg><svg style="position:absolute;left:172px;top:101px" width="13" height="13" viewBox="0 0 13 13"><path d="M6.5 0.8L11.8 3.6V9.4L6.5 12.2L1.2 9.4V3.6Z" fill="#6e6e6e"/><text x="6.5" y="8.3" font-size="4.2" font-weight="bold" text-anchor="middle" fill="#fff" font-family="Liberation Sans">PRO</text></svg><div style="position:absolute;left:195.5px;top:97px;width:0.8px;height:21.5px;background:#dcdcdc"></div><div style="position:absolute;left:261.7px;top:97px;width:0.8px;height:21.5px;background:#dcdcdc"></div><div style="position:absolute;left:319.7px;top:97px;width:0.8px;height:21.5px;background:#dcdcdc"></div><div style="position:absolute;left:377px;top:97px;width:0.8px;height:21.5px;background:#dcdcdc"></div><div style="position:absolute;left:447.5px;top:97px;width:0.8px;height:21.5px;background:#dcdcdc"></div><div style="position:absolute;left:494.5px;top:97px;width:0.8px;height:21.5px;background:#dcdcdc"></div><div style="position:absolute;left:535.5px;top:97px;width:0.8px;height:21.5px;background:#dcdcdc"></div><div style="position:absolute;left:602.7px;top:97px;width:0.8px;height:21.5px;background:#dcdcdc"></div><div style="position:absolute;left:684.7px;top:97px;width:0.8px;height:21.5px;background:#dcdcdc"></div><div style="position:absolute;left:741.8px;top:97px;width:0.8px;height:21.5px;background:#dcdcdc"></div><div style="position:absolute;left:803px;top:97px;width:0.8px;height:21.5px;background:#dcdcdc"></div><div style="position:absolute;left:850.7px;top:97px;width:0.8px;height:21.5px;background:#dcdcdc"></div><div style="position:absolute;left:929.7px;top:97px;width:0.8px;height:21.5px;background:#dcdcdc"></div><div style="position:absolute;left:319.7px;top:96px;width:57.3px;height:23px;background:#ee8a10"></div><div class="t" style="left:205.30px;top:105.80px;font-size:7.3px;color:#505050;transform:scaleX(0.9855);-webkit-text-stroke:0.15px #505050;">Ausgangsplan</div><div class="t" style="left:271.70px;top:105.80px;font-size:7.3px;color:#505050;transform:scaleX(1.0068);-webkit-text-stroke:0.15px #505050;">Demontage</div><div class="t" style="left:330.00px;top:105.80px;font-size:7.3px;color:#ffffff;transform:scaleX(1.0401);-webkit-text-stroke:0.15px #ffffff;">Partitionen</div><div class="t" style="left:387.00px;top:105.80px;font-size:7.3px;color:#505050;-webkit-text-stroke:0.15px #505050;">Räumlichkeiten</div><div class="t" style="left:457.50px;top:105.80px;font-size:7.3px;color:#505050;transform:scaleX(0.9894);-webkit-text-stroke:0.15px #505050;">Heizung</div><div class="t" style="left:504.70px;top:105.80px;font-size:7.3px;color:#505050;transform:scaleX(1.0210);-webkit-text-stroke:0.15px #505050;">Möbel</div><div class="t" style="left:545.80px;top:105.80px;font-size:7.3px;color:#505050;-webkit-text-stroke:0.15px #505050;">Sanitärtechnik</div><div class="t" style="left:613.00px;top:105.80px;font-size:7.3px;color:#505050;-webkit-text-stroke:0.15px #505050;">Wasserversorgung</div><div class="t" style="left:694.00px;top:105.80px;font-size:7.3px;color:#505050;transform:scaleX(0.9883);-webkit-text-stroke:0.15px #505050;">Steckdosen</div><div class="t" style="left:752.60px;top:105.80px;font-size:7.3px;color:#505050;-webkit-text-stroke:0.15px #505050;">Beleuchtung</div><div class="t" style="left:813.80px;top:105.80px;font-size:7.3px;color:#505050;transform:scaleX(0.9671);-webkit-text-stroke:0.15px #505050;">Schalter</div><div class="t" style="left:860.80px;top:105.80px;font-size:7.3px;color:#505050;-webkit-text-stroke:0.15px #505050;">Fußbodenheizung</div><svg style="position:absolute;left:945px;top:104px" width="7" height="9" viewBox="0 0 7 9"><path d="M2 1.2L5.3 4.5L2 7.8" fill="none" stroke="#444" stroke-width="1.1"/></svg><div style="position:absolute;left:0px;top:542.5px;width:960px;height:21.5px;background:#fff;border-top:1px solid #cdcdcd"></div><div class="t" style="left:8.10px;top:551.15px;font-size:7.6px;color:#2e6f9f;font-weight:bold;transform:scaleX(0.9076);-webkit-text-stroke:0.2px #2e6f9f;">Hilfemit dem Planer</div><div class="t" style="left:654.00px;top:549.95px;font-size:7.4px;color:#555;transform:scaleX(0.9630);-webkit-text-stroke:0.1px #555;">cm</div><svg style="position:absolute;left:666px;top:551.3px" width="7" height="6" viewBox="0 0 7 6"><path d="M1 1.5L3.5 4L6 1.5" fill="none" stroke="#888" stroke-width="0.7"/></svg><div style="position:absolute;left:679.3px;top:544px;width:0.7px;height:20px;background:#e8e8e8"></div><div style="position:absolute;left:713.3px;top:544px;width:0.7px;height:20px;background:#e8e8e8"></div><div style="position:absolute;left:736.7px;top:544px;width:0.7px;height:20px;background:#e8e8e8"></div><div style="position:absolute;left:803.3px;top:544px;width:0.7px;height:20px;background:#e8e8e8"></div><div style="position:absolute;left:825.5px;top:544px;width:0.7px;height:20px;background:#e8e8e8"></div><div style="position:absolute;left:847.5px;top:544px;width:0.7px;height:20px;background:#e8e8e8"></div><div style="position:absolute;left:870.3px;top:544px;width:0.7px;height:20px;background:#e8e8e8"></div><div style="position:absolute;left:892.5px;top:544px;width:0.7px;height:20px;background:#e8e8e8"></div><div style="position:absolute;left:915px;top:544px;width:0.7px;height:20px;background:#e8e8e8"></div><div style="position:absolute;left:937.5px;top:544px;width:0.7px;height:20px;background:#e8e8e8"></div><svg style="position:absolute;left:684px;top:548px" width="12" height="11" viewBox="0 0 12 11"><path d="M10.5 9.5C10 6 8 4.5 5 4.5V2L1 5.5L5 9V6.5C7.5 6.5 9 7.5 10.5 9.5Z" fill="#555"/></svg><svg style="position:absolute;left:698px;top:548px" width="12" height="11" viewBox="0 0 12 11"><path d="M1.5 9.5C2 6 4 4.5 7 4.5V2L11 5.5L7 9V6.5C4.5 6.5 3 7.5 1.5 9.5Z" fill="#ccc"/></svg><svg style="position:absolute;left:719px;top:547px" width="11" height="13" viewBox="0 0 11 13"><path d="M2 3.5H9M4 3.5V2H7V3.5M2.8 4.5L3.3 11.5H7.7L8.2 4.5Z" fill="none" stroke="#666" stroke-width="0.9"/><path d="M4.5 6V10M6.5 6V10" stroke="#888" stroke-width="0.6"/></svg><svg style="position:absolute;left:742px;top:544.5px" width="12" height="8" viewBox="0 0 12 8"><circle cx="6" cy="4" r="2.5" fill="none" stroke="#777" stroke-width="0.7"/><path d="M6 2.8V4.2H7" stroke="#777" stroke-width="0.5" fill="none"/></svg><div style="position:absolute;left:741.7px;top:553.7px;width:12.3px;height:6.3px;background:#a4e488;border-radius:3.5px;border:0.6px solid #7fcf60"></div><div style="position:absolute;left:748.4px;top:553.9px;width:5.9px;height:5.9px;background:#fff;border-radius:50%;box-shadow:0 0 1px #777"></div><svg style="position:absolute;left:763px;top:544.5px" width="12" height="8" viewBox="0 0 12 8"><path d="M6 1.5V6.5M2 4L4 2.5V5.5ZM10 4L8 2.5V5.5Z" fill="#777" stroke="#777" stroke-width="0.5"/></svg><div style="position:absolute;left:762.7px;top:553.7px;width:12.3px;height:6.3px;background:#a4e488;border-radius:3.5px;border:0.6px solid #7fcf60"></div><div style="position:absolute;left:769.4px;top:553.9px;width:5.9px;height:5.9px;background:#fff;border-radius:50%;box-shadow:0 0 1px #777"></div><svg style="position:absolute;left:785px;top:544.5px" width="12" height="8" viewBox="0 0 12 8"><path d="M3 4A3.5 2.5 0 0 1 9 4A3.5 2.5 0 0 1 3 4M2.5 1.5L9.5 6.5" fill="none" stroke="#777" stroke-width="0.7"/></svg><div style="position:absolute;left:784.7px;top:553.7px;width:12.3px;height:6.3px;background:#a4e488;border-radius:3.5px;border:0.6px solid #7fcf60"></div><div style="position:absolute;left:791.4px;top:553.9px;width:5.9px;height:5.9px;background:#fff;border-radius:50%;box-shadow:0 0 1px #777"></div><svg style="position:absolute;left:807px;top:547px" width="14" height="13" viewBox="0 0 14 13"><path d="M2 7L7 2L11 5.5L6 10.5Z" fill="none" stroke="#777" stroke-width="0.9"/><text x="10" y="12" font-size="4.5" font-weight="bold" text-anchor="middle" fill="#555" font-family="Liberation Sans">90</text></svg><svg style="position:absolute;left:829px;top:548px" width="14" height="13" viewBox="0 0 14 13"><path d="M5 9L11 3L12.5 4.5L6.5 10.5L4.5 11Z" fill="none" stroke="#777" stroke-width="0.8"/><path d="M2 11.5H9" stroke="#999" stroke-width="0.8"/></svg><svg style="position:absolute;left:851px;top:548px" width="14" height="13" viewBox="0 0 14 13"><rect x="1.5" y="1.5" width="10" height="7" fill="none" stroke="#666" stroke-width="0.9"/><path d="M4 5H9M8 8.5L10 11V8.5" fill="none" stroke="#666" stroke-width="0.8"/></svg><div style="position:absolute;left:829.9px;top:540.5px;width:13.6px;height:6.4px;background:#2aa41a;border-radius:1px"></div><svg style="position:absolute;left:829.9px;top:540.5px" width="13.6" height="6.4" viewBox="0 0 13.6 6.4"><text x="6.8" y="5.3" font-size="5" font-weight="bold" text-anchor="middle" fill="#fff" textLength="9.4" lengthAdjust="spacingAndGlyphs">PRO</text></svg><div style="position:absolute;left:852.3px;top:540.5px;width:13.6px;height:6.4px;background:#2aa41a;border-radius:1px"></div><svg style="position:absolute;left:852.3px;top:540.5px" width="13.6" height="6.4" viewBox="0 0 13.6 6.4"><text x="6.8" y="5.3" font-size="5" font-weight="bold" text-anchor="middle" fill="#fff" textLength="9.4" lengthAdjust="spacingAndGlyphs">PRO</text></svg><svg style="position:absolute;left:875px;top:547px" width="12" height="14" viewBox="0 0 12 14"><path d="M1.5 1.5H7.5L10.5 4.5V12.5H1.5Z" fill="none" stroke="#888" stroke-width="0.9"/><path d="M4 6V10H8V8" fill="none" stroke="#888" stroke-width="0.7"/></svg><svg style="position:absolute;left:898px;top:548px" width="12" height="12" viewBox="0 0 12 12"><path d="M1.5 4V1.5H4M8 1.5H10.5V4M10.5 8V10.5H8M4 10.5H1.5V8" fill="none" stroke="#666" stroke-width="0.9"/><circle cx="6" cy="6" r="1.8" fill="none" stroke="#666" stroke-width="0.9"/></svg><svg style="position:absolute;left:920px;top:547px" width="13" height="13" viewBox="0 0 13 13"><path d="M10.5 5A4.5 4.5 0 0 0 2.5 4.5M2.5 8A4.5 4.5 0 0 0 10.5 8.5" fill="none" stroke="#888" stroke-width="0.9"/><path d="M1.5 2.5V5.5H4.5M11.5 10.5V7.5H8.5" fill="none" stroke="#888" stroke-width="0.9"/></svg><svg style="position:absolute;left:943px;top:547px" width="13" height="13" viewBox="0 0 13 13"><path d="M1.5 3.5H11.5M1.5 6.5H11.5M1.5 9.5H11.5" stroke="#777" stroke-width="0.8"/><circle cx="8" cy="3.5" r="1.4" fill="#fff" stroke="#777" stroke-width="0.8"/><circle cx="4.5" cy="6.5" r="1.4" fill="#fff" stroke="#777" stroke-width="0.8"/><circle cx="8" cy="9.5" r="1.4" fill="#fff" stroke="#777" stroke-width="0.8"/></svg></body></html>
